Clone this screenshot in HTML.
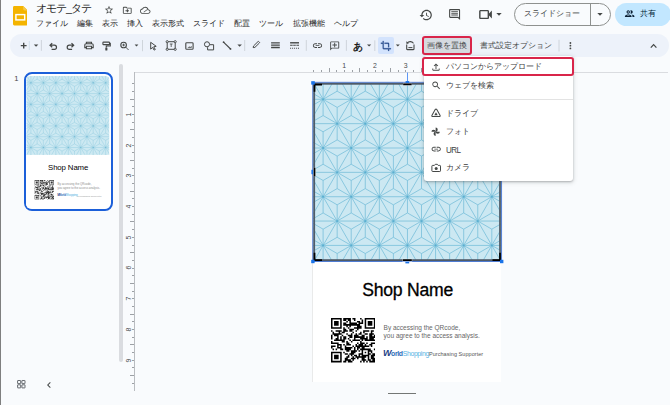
<!DOCTYPE html>
<html lang="ja"><head><meta charset="utf-8">
<style>
html,body{margin:0;padding:0}
body{width:670px;height:405px;overflow:hidden;position:relative;background:#f9fbfd;font-family:"Liberation Sans",sans-serif;color:#1f1f1f}
.a{position:absolute}
.t{position:absolute;white-space:nowrap;line-height:1}
svg{display:block}
.ic{position:absolute;fill:#444746}
.sep{position:absolute;width:1px;background:#c7c7c7;top:40px;height:12px}
.tick{position:absolute;background:#9ca0a5}
</style></head><body>
<div class="a" style="left:0;top:0;width:1px;height:405px;background:#7f7f7f"></div>

<!-- logo -->
<svg class="a" style="left:12.7px;top:6.3px" width="14.6" height="19.4" viewBox="0 0 14.6 19.4">
<path d="M1.3 0h8.9l4.4 4.4v13.7c0 .7-.6 1.3-1.3 1.3H1.3C.6 19.4 0 18.8 0 18.1V1.3C0 .6.6 0 1.3 0z" fill="#f4b400"/>
<path d="M10.2 0l4.4 4.4h-3.1c-.7 0-1.3-.6-1.3-1.3z" fill="#f7c94a"/>
<rect x="2.9" y="8.6" width="8.8" height="5.3" fill="none" stroke="#fff" stroke-width="1.45"/>
</svg>
<div class="t" style="left:35.5px;top:3.1px;font-size:10.8px;color:#1f1f1f;letter-spacing:-0.85px">オモテ_タテ</div>

<!-- star folder cloud -->
<svg class="ic" style="left:104.4px;top:4.9px" width="10" height="10" viewBox="0 0 24 24"><path d="M22 9.24l-7.19-.62L12 2 9.19 8.63 2 9.24l5.46 4.73L5.82 21 12 17.27 18.18 21l-1.63-7.03L22 9.24zM12 15.4l-3.76 2.27 1-4.28-3.32-2.88 4.38-.38L12 6.1l1.71 4.04 4.38.38-3.32 2.88 1 4.28L12 15.4z"/></svg>
<svg class="ic" style="left:121.6px;top:4.6px" width="10.5" height="10.5" viewBox="0 0 24 24"><path d="M20 6h-8l-2-2H4c-1.1 0-1.99.9-1.99 2L2 18c0 1.1.9 2 2 2h16c1.1 0 2-.9 2-2V8c0-1.1-.9-2-2-2zm0 12H4V6h5.17l2 2H20v10zm-7.84-6H8v2h4.16l-1.59 1.59L11.99 17 16 13.01 11.99 9l-1.41 1.41L12.16 12z"/></svg>
<svg class="ic" style="left:140.1px;top:4.6px" width="10.5" height="10.5" viewBox="0 0 24 24"><path d="M19.35 10.04C18.67 6.59 15.64 4 12 4 9.11 4 6.6 5.64 5.35 8.04 2.34 8.36 0 10.91 0 14c0 3.31 2.69 6 6 6h13c2.76 0 5-2.24 5-5 0-2.64-2.05-4.78-4.65-4.96zM19 18H6c-2.21 0-4-1.79-4-4 0-2.05 1.53-3.76 3.56-3.97l1.07-.11.5-.95C8.08 7.14 9.94 6 12 6c2.62 0 4.88 1.86 5.39 4.43l.3 1.5 1.53.11c1.56.1 2.78 1.41 2.78 2.96 0 1.65-1.35 3-3 3zM8 16l9-7 1 1.2-9 7z"/></svg>

<!-- menu -->
<div class="t" style="left:36.3px;top:19.9px;font-size:8px">ファイル</div>
<div class="t" style="left:77px;top:19.9px;font-size:8px">編集</div>
<div class="t" style="left:102.2px;top:19.9px;font-size:8px">表示</div>
<div class="t" style="left:127.3px;top:19.9px;font-size:8px">挿入</div>
<div class="t" style="left:152.3px;top:19.9px;font-size:8px">表示形式</div>
<div class="t" style="left:193.2px;top:19.9px;font-size:8px">スライド</div>
<div class="t" style="left:234.4px;top:19.9px;font-size:8px">配置</div>
<div class="t" style="left:259.4px;top:19.9px;font-size:8px">ツール</div>
<div class="t" style="left:293px;top:19.9px;font-size:8px">拡張機能</div>
<div class="t" style="left:333.8px;top:19.9px;font-size:8px">ヘルプ</div>

<!-- right header -->
<svg class="ic" style="left:419px;top:7.5px" width="14" height="14" viewBox="0 0 24 24"><path d="M13 3c-4.97 0-9 4.03-9 9H1l3.89 3.89.07.14L9 12H6c0-3.87 3.13-7 7-7s7 3.13 7 7-3.13 7-7 7c-1.93 0-3.68-.79-4.94-2.06l-1.42 1.42C8.27 19.99 10.51 21 13 21c4.97 0 9-4.03 9-9s-4.03-9-9-9zm-1 5v5l4.28 2.54.72-1.21-3.5-2.08V8H12z"/></svg>
<svg class="ic" style="left:447.7px;top:8.2px" width="13.2" height="13.2" viewBox="0 0 24 24"><path d="M20 2H4c-1.1 0-2 .9-2 2v12c0 1.1.9 2 2 2h14l4 4V4c0-1.1-.9-2-2-2zm0 15.17L18.83 16H4V4h16v13.17zM6 12h12v1.6H6zm0-3h12v1.6H6zm0-3h12v1.6H6z"/></svg>
<svg class="ic" style="left:476.6px;top:5.6px" width="17" height="17" viewBox="0 0 24 24"><path d="M17 10.5V7.5c0-1.1-.9-2-2-2H5c-1.1 0-2 .9-2 2v9c0 1.1.9 2 2 2h10c1.1 0 2-.9 2-2v-3l4 4v-11l-4 4zM15 16.5H5v-9h10v9z"/></svg>
<svg class="ic" style="left:495px;top:10px" width="8" height="8" viewBox="0 0 24 24"><path d="M4 9l8 8 8-8z"/></svg>

<div class="a" style="left:514px;top:3.3px;width:94.5px;height:20.8px;border:1px solid #8e918f;border-radius:12px"></div>
<div class="a" style="left:590px;top:4.3px;width:1px;height:20.8px;background:#8e918f"></div>
<div class="t" style="left:523.7px;top:10px;font-size:8px;color:#444746">スライドショー</div>
<svg class="ic" style="left:595.5px;top:10px" width="8" height="8" viewBox="0 0 24 24"><path d="M4 9l8 8 8-8z"/></svg>

<div class="a" style="left:614.7px;top:3px;width:56px;height:22.8px;background:#c2e7ff;border-radius:11.4px"></div>
<svg class="a" style="left:623.9px;top:8.45px;fill:#0a1f33" width="11.3" height="11.3" viewBox="0 0 24 24"><path d="M9 13.75c-2.34 0-7 1.17-7 3.5V19h14v-1.75c0-2.33-4.66-3.5-7-3.5zM4.34 17c.84-.58 2.87-1.25 4.66-1.25s3.82.67 4.66 1.25H4.34zM9 12c1.93 0 3.5-1.57 3.5-3.5S10.93 5 9 5 5.5 6.57 5.5 8.5 7.07 12 9 12zm0-5c.83 0 1.5.67 1.5 1.5S9.830 10 9 10s-1.5-.67-1.5-1.5S8.17 7 9 7zm7.04 6.810c1.16.84 1.96 1.96 1.96 3.44V19h4v-1.75c0-2.02-3.5-3.17-5.96-3.44zM15 12c1.93 0 3.5-1.57 3.5-3.5S16.93 5 15 5c-.54 0-1.04.13-1.5.35.63.89 1 1.98 1 3.15s-.37 2.26-1 3.15c.46.22.96.35 1.5.35z"/></svg>
<div class="t" style="left:639.8px;top:10px;font-size:8px;color:#001d35">共有</div>

<!-- toolbar -->
<div class="a" style="left:9.7px;top:33.7px;width:659.6px;height:23px;background:#edf2fa;border-radius:11.5px"></div>
<div class="a" style="left:377.5px;top:37.1px;width:16.5px;height:16.6px;background:#d3e3fd;border-radius:2px"></div>
<svg class="a" style="left:0;top:0" width="670" height="405" viewBox="0 0 670 405">
<g fill="none" stroke="#444746" stroke-width="1.1">
<!-- plus -->
<path d="M20.8 45.6H26.6M23.7 42.8V48.4" stroke-width="1.4"/>
<path d="M29.3 41V50" stroke="#c9dbe9" stroke-width="0.8"/>
<path d="M41.4 40V50.8M142.5 40V51.2M244.7 40V51M306.3 40V50.8M346.4 40V50.8M374.8 40.3V51M559 39.8V51.5" stroke="#c7cdd3" stroke-width="0.8"/>
<!-- undo / redo -->
<path d="M52.2 43.1L50 45.2L52.2 47.3M50.2 45.2H54.4A2.1 2.1 0 0 1 54.4 49.4H51.6" stroke-width="1.2"/>
<path d="M71.5 43.1L73.7 45.2L71.5 47.3M73.5 45.2H69.3A2.1 2.1 0 0 0 69.3 49.4H72.1" stroke-width="1.2"/>
<!-- print -->
<path d="M86.4 43.8V42.2H91.5V43.8M86.4 47.6H84.8V45A1.2 1.2 0 0 1 86 43.8H92A1.2 1.2 0 0 1 93.2 45V47.6H91.5M86.4 46.2H91.5V48.8H86.4Z" stroke-width="1.1"/>
<!-- paint roller -->
<path d="M103.6 42.1H108.8A.7 .7 0 0 1 109.5 42.8V43.9A.7 .7 0 0 1 108.8 44.6H103.6A.7 .7 0 0 1 102.9 43.9V42.8A.7 .7 0 0 1 103.6 42.1ZM109.5 43.3H110.3V46H106.3V47.6" stroke-width="1.1"/>
<rect x="105.3" y="47.5" width="2.1" height="3.1" rx=".5" fill="#444746" stroke="none"/>
<!-- zoom -->
<circle cx="123.6" cy="45" r="2.8" stroke-width="1.1"/>
<path d="M125.6 47L128.6 50M122.3 45H124.9M123.6 43.7V46.3" stroke-width="0.9"/>
<!-- cursor -->
<path d="M150.7 42.3L156.2 46.3L153.7 46.8L155.3 49.5L154.1 50.1L152.6 47.4L150.7 49.1Z" stroke-width="1"/>
<!-- text box -->
<rect x="167.2" y="41.7" width="8" height="7.6" stroke-width="1"/>
<g fill="#edf2fa" stroke-width="0.9"><circle cx="167.2" cy="41.7" r="1.1"/><circle cx="175.2" cy="41.7" r="1.1"/><circle cx="167.2" cy="49.3" r="1.1"/><circle cx="175.2" cy="49.3" r="1.1"/></g>
<path d="M169.8 44H172.6M171.2 44V47" stroke-width="0.8"/>
<!-- image -->
<rect x="185.8" y="42.7" width="7.3" height="6.6" rx="0.9" stroke-width="1.1"/>
<path d="M187.4 47.7L189.3 46.6L190.4 47.1L191.7 46V47.7Z" fill="#444746" stroke="none"/>
<!-- shapes -->
<circle cx="207" cy="44.3" r="2.55" stroke-width="1"/>
<path d="M209.9 44.7H213.6V49.9H207.6V47.2" stroke-width="1"/>
<!-- line -->
<path d="M223.5 42.1L230.6 49" stroke-width="1.1"/>
<circle cx="223.6" cy="42.2" r=".9" fill="#444746" stroke="none"/><circle cx="230.5" cy="48.9" r=".9" fill="#444746" stroke="none"/>
<!-- pen -->
<path d="M253.2 47.6L253.5 46L258 41.6A.6 .6 0 0 1 258.8 41.6L259.4 42.2A.6 .6 0 0 1 259.4 43L254.9 47.4Z" stroke-width="1"/>
<!-- line weight -->
<path d="M271.1 42.8H279.8M271.1 45.2H279.8M271.1 47.5H279.8" stroke-width="1.3"/>
<!-- line dash -->
<path d="M290.1 42.8H299" stroke-width="1.4"/>
<path d="M290.1 45.2H292.7M293.2 45.2H295.8M296.4 45.2H299" stroke-width="1.1"/>
<path d="M290.1 48.3H291.1M292.1 48.3H293.1M294.1 48.3H295.1M296.1 48.3H297.1M298 48.3H299" stroke-width="1.1"/>
<!-- arrows -->
<g fill="#444746" stroke="none">
<path d="M33.8 44.5H38.3L36.05 46.8Z"/>
<path d="M134.6 44.5H138.4L136.5 46.6Z"/>
<path d="M237.4 44.5H241.9L239.65 46.7Z"/>
<path d="M367 44.6H371.2L369.1 46.5Z"/>
<path d="M395.8 44.6H399.8L397.8 46.6Z"/>
</g>
</g>
<g fill="#444746">
<!-- link -->
<path transform="translate(311.98 40.08) scale(0.46)" d="M3.9 12c0-1.71 1.39-3.1 3.1-3.1h4V7H7c-2.76 0-5 2.24-5 5s2.24 5 5 5h4v-1.9H7c-1.71 0-3.1-1.39-3.1-3.1zM8 13h8v-2H8v2zm9-6h-4v1.9h4c1.71 0 3.1 1.39 3.1 3.1s-1.39 3.1-3.1 3.1h-4V17h4c2.76 0 5-2.24 5-5s-2.24-5-5-5z"/>
<!-- add comment -->
<path transform="translate(329.3 40.5) scale(0.45)" d="M22 4c0-1.1-.9-2-2-2H4c-1.1 0-1.99.9-1.99 2L2 22l4-4h14c1.1 0 2-.9 2-2V4zm-2 12H5.17L4 17.17V4h16v12zM13 5h-2v4H7v2h4v4h2v-4h4V9h-4z"/>
<!-- reset image -->
</g>
<g fill="none" stroke="#444746" stroke-width="1.1">
<path d="M406.7 44.6V48.9A.7 .7 0 0 0 407.4 49.6H413.3A.7 .7 0 0 0 414 48.9V44.6"/>
<path d="M407.3 42.9A3.4 2.6 0 0 1 413.5 43.4"/>
<path d="M408.4 47.6H412.4" stroke-width="1"/>
</g>
<path d="M406.2 41.2L406.6 43.9L409 43.2Z" fill="#444746"/>
<!-- crop -->
<path fill="#23488a" transform="translate(380.45 40.5) scale(0.455)" d="M17 15h2V7c0-1.1-.9-2-2-2H9v2h8v8zM7 17V1H5v4H1v2h4v10c0 1.1.9 2 2 2h10v4h2v-4h4v-2H7z" stroke="#23488a" stroke-width="0.5"/>
<g fill="#444746">
<!-- more vert -->
<circle cx="570.4" cy="43" r=".9"/><circle cx="570.4" cy="45.7" r=".9"/><circle cx="570.4" cy="48.4" r=".9"/>
</g>
<path d="M650.8 47.6L653.6 44.6L656.4 47.6" fill="none" stroke="#444746" stroke-width="1.2"/>
</svg>
<div class="t" style="left:352.6px;top:41.6px;font-size:10px;font-weight:bold;color:#1f1f1f">あ</div>
<div class="a" style="left:422.2px;top:35.7px;width:45.5px;height:14.9px;border:2px solid #d9254a;border-radius:3px;background:#d5dae0"></div>
<div class="t" style="left:427px;top:42.3px;font-size:8px;color:#444746">画像を置換</div>
<div class="t" style="left:479.7px;top:42.3px;font-size:8px;color:#444746">書式設定オプション</div>


<!-- left panel -->
<div class="t" style="left:14.3px;top:75.3px;font-size:7.6px;color:#444746">1</div>
<div class="a" style="left:24px;top:72.4px;width:84.6px;height:134.2px;border:2.2px solid #1b5fd9;border-radius:8px;background:#fff;overflow:hidden"></div>
<div class="a" style="left:26.4px;top:75.55px;width:188.5px;height:298.5px;background:#fff;overflow:hidden;border-radius:10px;transform-origin:0 0;transform:scale(0.443)"><svg width="187.90" height="177.80" style="position:absolute;left:0.60px;top:0.00px;background:#cde9f2" viewBox="0 0 187.90 177.80"><path d="M-5.00 -57.76L192.90 -57.76M-60.20 -57.76L-74.26 -33.41M-60.20 -57.76L-46.14 -33.41M-46.14 -49.64L-60.20 -57.76M-46.14 -49.64L-32.08 -57.76M-46.14 -49.64L-46.14 -33.41M-60.20 -41.52L-60.20 -57.76M-60.20 -41.52L-74.26 -33.41M-60.20 -41.52L-46.14 -33.41M-32.08 -57.76L-46.14 -33.41M-32.08 -57.76L-18.02 -33.41M-18.02 -49.64L-32.08 -57.76M-18.02 -49.64L-3.96 -57.76M-18.02 -49.64L-18.02 -33.41M-32.08 -41.52L-32.08 -57.76M-32.08 -41.52L-46.14 -33.41M-32.08 -41.52L-18.02 -33.41M-3.96 -57.76L-18.02 -33.41M-3.96 -57.76L10.10 -33.41M10.10 -49.64L-3.96 -57.76M10.10 -49.64L24.16 -57.76M10.10 -49.64L10.10 -33.41M-3.96 -41.52L-3.96 -57.76M-3.96 -41.52L-18.02 -33.41M-3.96 -41.52L10.10 -33.41M24.16 -57.76L10.10 -33.41M24.16 -57.76L38.22 -33.41M38.22 -49.64L24.16 -57.76M38.22 -49.64L52.28 -57.76M38.22 -49.64L38.22 -33.41M24.16 -41.52L24.16 -57.76M24.16 -41.52L10.10 -33.41M24.16 -41.52L38.22 -33.41M52.28 -57.76L38.22 -33.41M52.28 -57.76L66.34 -33.41M66.34 -49.64L52.28 -57.76M66.34 -49.64L80.40 -57.76M66.34 -49.64L66.34 -33.41M52.28 -41.52L52.28 -57.76M52.28 -41.52L38.22 -33.41M52.28 -41.52L66.34 -33.41M80.40 -57.76L66.34 -33.41M80.40 -57.76L94.46 -33.41M94.46 -49.64L80.40 -57.76M94.46 -49.64L108.52 -57.76M94.46 -49.64L94.46 -33.41M80.40 -41.52L80.40 -57.76M80.40 -41.52L66.34 -33.41M80.40 -41.52L94.46 -33.41M108.52 -57.76L94.46 -33.41M108.52 -57.76L122.58 -33.41M122.58 -49.64L108.52 -57.76M122.58 -49.64L136.64 -57.76M122.58 -49.64L122.58 -33.41M108.52 -41.52L108.52 -57.76M108.52 -41.52L94.46 -33.41M108.52 -41.52L122.58 -33.41M136.64 -57.76L122.58 -33.41M136.64 -57.76L150.70 -33.41M150.70 -49.64L136.64 -57.76M150.70 -49.64L164.76 -57.76M150.70 -49.64L150.70 -33.41M136.64 -41.52L136.64 -57.76M136.64 -41.52L122.58 -33.41M136.64 -41.52L150.70 -33.41M164.76 -57.76L150.70 -33.41M164.76 -57.76L178.82 -33.41M178.82 -49.64L164.76 -57.76M178.82 -49.64L192.88 -57.76M178.82 -49.64L178.82 -33.41M164.76 -41.52L164.76 -57.76M164.76 -41.52L150.70 -33.41M164.76 -41.52L178.82 -33.41M192.88 -57.76L178.82 -33.41M192.88 -57.76L206.94 -33.41M206.94 -49.64L192.88 -57.76M206.94 -49.64L221.00 -57.76M206.94 -49.64L206.94 -33.41M192.88 -41.52L192.88 -57.76M192.88 -41.52L178.82 -33.41M192.88 -41.52L206.94 -33.41M221.00 -57.76L206.94 -33.41M221.00 -57.76L235.06 -33.41M235.06 -49.64L221.00 -57.76M235.06 -49.64L249.12 -57.76M235.06 -49.64L235.06 -33.41M221.00 -41.52L221.00 -57.76M221.00 -41.52L206.94 -33.41M221.00 -41.52L235.06 -33.41M249.12 -57.76L235.06 -33.41M249.12 -57.76L263.18 -33.41M263.18 -49.64L249.12 -57.76M263.18 -49.64L277.24 -57.76M263.18 -49.64L263.18 -33.41M249.12 -41.52L249.12 -57.76M249.12 -41.52L235.06 -33.41M249.12 -41.52L263.18 -33.41M277.24 -57.76L263.18 -33.41M277.24 -57.76L291.30 -33.41M291.30 -49.64L277.24 -57.76M291.30 -49.64L305.36 -57.76M291.30 -49.64L291.30 -33.41M277.24 -41.52L277.24 -57.76M277.24 -41.52L263.18 -33.41M277.24 -41.52L291.30 -33.41M-5.00 -33.41L192.90 -33.41M-74.26 -33.41L-88.32 -9.05M-74.26 -33.41L-60.20 -9.05M-60.20 -25.29L-74.26 -33.41M-60.20 -25.29L-46.14 -33.41M-60.20 -25.29L-60.20 -9.05M-74.26 -17.17L-74.26 -33.41M-74.26 -17.17L-88.32 -9.05M-74.26 -17.17L-60.20 -9.05M-46.14 -33.41L-60.20 -9.05M-46.14 -33.41L-32.08 -9.05M-32.08 -25.29L-46.14 -33.41M-32.08 -25.29L-18.02 -33.41M-32.08 -25.29L-32.08 -9.05M-46.14 -17.17L-46.14 -33.41M-46.14 -17.17L-60.20 -9.05M-46.14 -17.17L-32.08 -9.05M-18.02 -33.41L-32.08 -9.05M-18.02 -33.41L-3.96 -9.05M-3.96 -25.29L-18.02 -33.41M-3.96 -25.29L10.10 -33.41M-3.96 -25.29L-3.96 -9.05M-18.02 -17.17L-18.02 -33.41M-18.02 -17.17L-32.08 -9.05M-18.02 -17.17L-3.96 -9.05M10.10 -33.41L-3.96 -9.05M10.10 -33.41L24.16 -9.05M24.16 -25.29L10.10 -33.41M24.16 -25.29L38.22 -33.41M24.16 -25.29L24.16 -9.05M10.10 -17.17L10.10 -33.41M10.10 -17.17L-3.96 -9.05M10.10 -17.17L24.16 -9.05M38.22 -33.41L24.16 -9.05M38.22 -33.41L52.28 -9.05M52.28 -25.29L38.22 -33.41M52.28 -25.29L66.34 -33.41M52.28 -25.29L52.28 -9.05M38.22 -17.17L38.22 -33.41M38.22 -17.17L24.16 -9.05M38.22 -17.17L52.28 -9.05M66.34 -33.41L52.28 -9.05M66.34 -33.41L80.40 -9.05M80.40 -25.29L66.34 -33.41M80.40 -25.29L94.46 -33.41M80.40 -25.29L80.40 -9.05M66.34 -17.17L66.34 -33.41M66.34 -17.17L52.28 -9.05M66.34 -17.17L80.40 -9.05M94.46 -33.41L80.40 -9.05M94.46 -33.41L108.52 -9.05M108.52 -25.29L94.46 -33.41M108.52 -25.29L122.58 -33.41M108.52 -25.29L108.52 -9.05M94.46 -17.17L94.46 -33.41M94.46 -17.17L80.40 -9.05M94.46 -17.17L108.52 -9.05M122.58 -33.41L108.52 -9.05M122.58 -33.41L136.64 -9.05M136.64 -25.29L122.58 -33.41M136.64 -25.29L150.70 -33.41M136.64 -25.29L136.64 -9.05M122.58 -17.17L122.58 -33.41M122.58 -17.17L108.52 -9.05M122.58 -17.17L136.64 -9.05M150.70 -33.41L136.64 -9.05M150.70 -33.41L164.76 -9.05M164.76 -25.29L150.70 -33.41M164.76 -25.29L178.82 -33.41M164.76 -25.29L164.76 -9.05M150.70 -17.17L150.70 -33.41M150.70 -17.17L136.64 -9.05M150.70 -17.17L164.76 -9.05M178.82 -33.41L164.76 -9.05M178.82 -33.41L192.88 -9.05M192.88 -25.29L178.82 -33.41M192.88 -25.29L206.94 -33.41M192.88 -25.29L192.88 -9.05M178.82 -17.17L178.82 -33.41M178.82 -17.17L164.76 -9.05M178.82 -17.17L192.88 -9.05M206.94 -33.41L192.88 -9.05M206.94 -33.41L221.00 -9.05M221.00 -25.29L206.94 -33.41M221.00 -25.29L235.06 -33.41M221.00 -25.29L221.00 -9.05M206.94 -17.17L206.94 -33.41M206.94 -17.17L192.88 -9.05M206.94 -17.17L221.00 -9.05M235.06 -33.41L221.00 -9.05M235.06 -33.41L249.12 -9.05M249.12 -25.29L235.06 -33.41M249.12 -25.29L263.18 -33.41M249.12 -25.29L249.12 -9.05M235.06 -17.17L235.06 -33.41M235.06 -17.17L221.00 -9.05M235.06 -17.17L249.12 -9.05M263.18 -33.41L249.12 -9.05M263.18 -33.41L277.24 -9.05M277.24 -25.29L263.18 -33.41M277.24 -25.29L291.30 -33.41M277.24 -25.29L277.24 -9.05M263.18 -17.17L263.18 -33.41M263.18 -17.17L249.12 -9.05M263.18 -17.17L277.24 -9.05M-5.00 -9.05L192.90 -9.05M-60.20 -9.05L-74.26 15.30M-60.20 -9.05L-46.14 15.30M-46.14 -0.94L-60.20 -9.05M-46.14 -0.94L-32.08 -9.05M-46.14 -0.94L-46.14 15.30M-60.20 7.18L-60.20 -9.05M-60.20 7.18L-74.26 15.30M-60.20 7.18L-46.14 15.30M-32.08 -9.05L-46.14 15.30M-32.08 -9.05L-18.02 15.30M-18.02 -0.94L-32.08 -9.05M-18.02 -0.94L-3.96 -9.05M-18.02 -0.94L-18.02 15.30M-32.08 7.18L-32.08 -9.05M-32.08 7.18L-46.14 15.30M-32.08 7.18L-18.02 15.30M-3.96 -9.05L-18.02 15.30M-3.96 -9.05L10.10 15.30M10.10 -0.94L-3.96 -9.05M10.10 -0.94L24.16 -9.05M10.10 -0.94L10.10 15.30M-3.96 7.18L-3.96 -9.05M-3.96 7.18L-18.02 15.30M-3.96 7.18L10.10 15.30M24.16 -9.05L10.10 15.30M24.16 -9.05L38.22 15.30M38.22 -0.94L24.16 -9.05M38.22 -0.94L52.28 -9.05M38.22 -0.94L38.22 15.30M24.16 7.18L24.16 -9.05M24.16 7.18L10.10 15.30M24.16 7.18L38.22 15.30M52.28 -9.05L38.22 15.30M52.28 -9.05L66.34 15.30M66.34 -0.94L52.28 -9.05M66.34 -0.94L80.40 -9.05M66.34 -0.94L66.34 15.30M52.28 7.18L52.28 -9.05M52.28 7.18L38.22 15.30M52.28 7.18L66.34 15.30M80.40 -9.05L66.34 15.30M80.40 -9.05L94.46 15.30M94.46 -0.94L80.40 -9.05M94.46 -0.94L108.52 -9.05M94.46 -0.94L94.46 15.30M80.40 7.18L80.40 -9.05M80.40 7.18L66.34 15.30M80.40 7.18L94.46 15.30M108.52 -9.05L94.46 15.30M108.52 -9.05L122.58 15.30M122.58 -0.94L108.52 -9.05M122.58 -0.94L136.64 -9.05M122.58 -0.94L122.58 15.30M108.52 7.18L108.52 -9.05M108.52 7.18L94.46 15.30M108.52 7.18L122.58 15.30M136.64 -9.05L122.58 15.30M136.64 -9.05L150.70 15.30M150.70 -0.94L136.64 -9.05M150.70 -0.94L164.76 -9.05M150.70 -0.94L150.70 15.30M136.64 7.18L136.64 -9.05M136.64 7.18L122.58 15.30M136.64 7.18L150.70 15.30M164.76 -9.05L150.70 15.30M164.76 -9.05L178.82 15.30M178.82 -0.94L164.76 -9.05M178.82 -0.94L192.88 -9.05M178.82 -0.94L178.82 15.30M164.76 7.18L164.76 -9.05M164.76 7.18L150.70 15.30M164.76 7.18L178.82 15.30M192.88 -9.05L178.82 15.30M192.88 -9.05L206.94 15.30M206.94 -0.94L192.88 -9.05M206.94 -0.94L221.00 -9.05M206.94 -0.94L206.94 15.30M192.88 7.18L192.88 -9.05M192.88 7.18L178.82 15.30M192.88 7.18L206.94 15.30M221.00 -9.05L206.94 15.30M221.00 -9.05L235.06 15.30M235.06 -0.94L221.00 -9.05M235.06 -0.94L249.12 -9.05M235.06 -0.94L235.06 15.30M221.00 7.18L221.00 -9.05M221.00 7.18L206.94 15.30M221.00 7.18L235.06 15.30M249.12 -9.05L235.06 15.30M249.12 -9.05L263.18 15.30M263.18 -0.94L249.12 -9.05M263.18 -0.94L277.24 -9.05M263.18 -0.94L263.18 15.30M249.12 7.18L249.12 -9.05M249.12 7.18L235.06 15.30M249.12 7.18L263.18 15.30M277.24 -9.05L263.18 15.30M277.24 -9.05L291.30 15.30M291.30 -0.94L277.24 -9.05M291.30 -0.94L305.36 -9.05M291.30 -0.94L291.30 15.30M277.24 7.18L277.24 -9.05M277.24 7.18L263.18 15.30M277.24 7.18L291.30 15.30M-5.00 15.30L192.90 15.30M-74.26 15.30L-88.32 39.65M-74.26 15.30L-60.20 39.65M-60.20 23.42L-74.26 15.30M-60.20 23.42L-46.14 15.30M-60.20 23.42L-60.20 39.65M-74.26 31.54L-74.26 15.30M-74.26 31.54L-88.32 39.65M-74.26 31.54L-60.20 39.65M-46.14 15.30L-60.20 39.65M-46.14 15.30L-32.08 39.65M-32.08 23.42L-46.14 15.30M-32.08 23.42L-18.02 15.30M-32.08 23.42L-32.08 39.65M-46.14 31.54L-46.14 15.30M-46.14 31.54L-60.20 39.65M-46.14 31.54L-32.08 39.65M-18.02 15.30L-32.08 39.65M-18.02 15.30L-3.96 39.65M-3.96 23.42L-18.02 15.30M-3.96 23.42L10.10 15.30M-3.96 23.42L-3.96 39.65M-18.02 31.54L-18.02 15.30M-18.02 31.54L-32.08 39.65M-18.02 31.54L-3.96 39.65M10.10 15.30L-3.96 39.65M10.10 15.30L24.16 39.65M24.16 23.42L10.10 15.30M24.16 23.42L38.22 15.30M24.16 23.42L24.16 39.65M10.10 31.54L10.10 15.30M10.10 31.54L-3.96 39.65M10.10 31.54L24.16 39.65M38.22 15.30L24.16 39.65M38.22 15.30L52.28 39.65M52.28 23.42L38.22 15.30M52.28 23.42L66.34 15.30M52.28 23.42L52.28 39.65M38.22 31.54L38.22 15.30M38.22 31.54L24.16 39.65M38.22 31.54L52.28 39.65M66.34 15.30L52.28 39.65M66.34 15.30L80.40 39.65M80.40 23.42L66.34 15.30M80.40 23.42L94.46 15.30M80.40 23.42L80.40 39.65M66.34 31.54L66.34 15.30M66.34 31.54L52.28 39.65M66.34 31.54L80.40 39.65M94.46 15.30L80.40 39.65M94.46 15.30L108.52 39.65M108.52 23.42L94.46 15.30M108.52 23.42L122.58 15.30M108.52 23.42L108.52 39.65M94.46 31.54L94.46 15.30M94.46 31.54L80.40 39.65M94.46 31.54L108.52 39.65M122.58 15.30L108.52 39.65M122.58 15.30L136.64 39.65M136.64 23.42L122.58 15.30M136.64 23.42L150.70 15.30M136.64 23.42L136.64 39.65M122.58 31.54L122.58 15.30M122.58 31.54L108.52 39.65M122.58 31.54L136.64 39.65M150.70 15.30L136.64 39.65M150.70 15.30L164.76 39.65M164.76 23.42L150.70 15.30M164.76 23.42L178.82 15.30M164.76 23.42L164.76 39.65M150.70 31.54L150.70 15.30M150.70 31.54L136.64 39.65M150.70 31.54L164.76 39.65M178.82 15.30L164.76 39.65M178.82 15.30L192.88 39.65M192.88 23.42L178.82 15.30M192.88 23.42L206.94 15.30M192.88 23.42L192.88 39.65M178.82 31.54L178.82 15.30M178.82 31.54L164.76 39.65M178.82 31.54L192.88 39.65M206.94 15.30L192.88 39.65M206.94 15.30L221.00 39.65M221.00 23.42L206.94 15.30M221.00 23.42L235.06 15.30M221.00 23.42L221.00 39.65M206.94 31.54L206.94 15.30M206.94 31.54L192.88 39.65M206.94 31.54L221.00 39.65M235.06 15.30L221.00 39.65M235.06 15.30L249.12 39.65M249.12 23.42L235.06 15.30M249.12 23.42L263.18 15.30M249.12 23.42L249.12 39.65M235.06 31.54L235.06 15.30M235.06 31.54L221.00 39.65M235.06 31.54L249.12 39.65M263.18 15.30L249.12 39.65M263.18 15.30L277.24 39.65M277.24 23.42L263.18 15.30M277.24 23.42L291.30 15.30M277.24 23.42L277.24 39.65M263.18 31.54L263.18 15.30M263.18 31.54L249.12 39.65M263.18 31.54L277.24 39.65M-5.00 39.65L192.90 39.65M-60.20 39.65L-74.26 64.01M-60.20 39.65L-46.14 64.01M-46.14 47.77L-60.20 39.65M-46.14 47.77L-32.08 39.65M-46.14 47.77L-46.14 64.01M-60.20 55.89L-60.20 39.65M-60.20 55.89L-74.26 64.01M-60.20 55.89L-46.14 64.01M-32.08 39.65L-46.14 64.01M-32.08 39.65L-18.02 64.01M-18.02 47.77L-32.08 39.65M-18.02 47.77L-3.96 39.65M-18.02 47.77L-18.02 64.01M-32.08 55.89L-32.08 39.65M-32.08 55.89L-46.14 64.01M-32.08 55.89L-18.02 64.01M-3.96 39.65L-18.02 64.01M-3.96 39.65L10.10 64.01M10.10 47.77L-3.96 39.65M10.10 47.77L24.16 39.65M10.10 47.77L10.10 64.01M-3.96 55.89L-3.96 39.65M-3.96 55.89L-18.02 64.01M-3.96 55.89L10.10 64.01M24.16 39.65L10.10 64.01M24.16 39.65L38.22 64.01M38.22 47.77L24.16 39.65M38.22 47.77L52.28 39.65M38.22 47.77L38.22 64.01M24.16 55.89L24.16 39.65M24.16 55.89L10.10 64.01M24.16 55.89L38.22 64.01M52.28 39.65L38.22 64.01M52.28 39.65L66.34 64.01M66.34 47.77L52.28 39.65M66.34 47.77L80.40 39.65M66.34 47.77L66.34 64.01M52.28 55.89L52.28 39.65M52.28 55.89L38.22 64.01M52.28 55.89L66.34 64.01M80.40 39.65L66.34 64.01M80.40 39.65L94.46 64.01M94.46 47.77L80.40 39.65M94.46 47.77L108.52 39.65M94.46 47.77L94.46 64.01M80.40 55.89L80.40 39.65M80.40 55.89L66.34 64.01M80.40 55.89L94.46 64.01M108.52 39.65L94.46 64.01M108.52 39.65L122.58 64.01M122.58 47.77L108.52 39.65M122.58 47.77L136.64 39.65M122.58 47.77L122.58 64.01M108.52 55.89L108.52 39.65M108.52 55.89L94.46 64.01M108.52 55.89L122.58 64.01M136.64 39.65L122.58 64.01M136.64 39.65L150.70 64.01M150.70 47.77L136.64 39.65M150.70 47.77L164.76 39.65M150.70 47.77L150.70 64.01M136.64 55.89L136.64 39.65M136.64 55.89L122.58 64.01M136.64 55.89L150.70 64.01M164.76 39.65L150.70 64.01M164.76 39.65L178.82 64.01M178.82 47.77L164.76 39.65M178.82 47.77L192.88 39.65M178.82 47.77L178.82 64.01M164.76 55.89L164.76 39.65M164.76 55.89L150.70 64.01M164.76 55.89L178.82 64.01M192.88 39.65L178.82 64.01M192.88 39.65L206.94 64.01M206.94 47.77L192.88 39.65M206.94 47.77L221.00 39.65M206.94 47.77L206.94 64.01M192.88 55.89L192.88 39.65M192.88 55.89L178.82 64.01M192.88 55.89L206.94 64.01M221.00 39.65L206.94 64.01M221.00 39.65L235.06 64.01M235.06 47.77L221.00 39.65M235.06 47.77L249.12 39.65M235.06 47.77L235.06 64.01M221.00 55.89L221.00 39.65M221.00 55.89L206.94 64.01M221.00 55.89L235.06 64.01M249.12 39.65L235.06 64.01M249.12 39.65L263.18 64.01M263.18 47.77L249.12 39.65M263.18 47.77L277.24 39.65M263.18 47.77L263.18 64.01M249.12 55.89L249.12 39.65M249.12 55.89L235.06 64.01M249.12 55.89L263.18 64.01M277.24 39.65L263.18 64.01M277.24 39.65L291.30 64.01M291.30 47.77L277.24 39.65M291.30 47.77L305.36 39.65M291.30 47.77L291.30 64.01M277.24 55.89L277.24 39.65M277.24 55.89L263.18 64.01M277.24 55.89L291.30 64.01M-5.00 64.01L192.90 64.01M-74.26 64.01L-88.32 88.36M-74.26 64.01L-60.20 88.36M-60.20 72.12L-74.26 64.01M-60.20 72.12L-46.14 64.01M-60.20 72.12L-60.20 88.36M-74.26 80.24L-74.26 64.01M-74.26 80.24L-88.32 88.36M-74.26 80.24L-60.20 88.36M-46.14 64.01L-60.20 88.36M-46.14 64.01L-32.08 88.36M-32.08 72.12L-46.14 64.01M-32.08 72.12L-18.02 64.01M-32.08 72.12L-32.08 88.36M-46.14 80.24L-46.14 64.01M-46.14 80.24L-60.20 88.36M-46.14 80.24L-32.08 88.36M-18.02 64.01L-32.08 88.36M-18.02 64.01L-3.96 88.36M-3.96 72.12L-18.02 64.01M-3.96 72.12L10.10 64.01M-3.96 72.12L-3.96 88.36M-18.02 80.24L-18.02 64.01M-18.02 80.24L-32.08 88.36M-18.02 80.24L-3.96 88.36M10.10 64.01L-3.96 88.36M10.10 64.01L24.16 88.36M24.16 72.12L10.10 64.01M24.16 72.12L38.22 64.01M24.16 72.12L24.16 88.36M10.10 80.24L10.10 64.01M10.10 80.24L-3.96 88.36M10.10 80.24L24.16 88.36M38.22 64.01L24.16 88.36M38.22 64.01L52.28 88.36M52.28 72.12L38.22 64.01M52.28 72.12L66.34 64.01M52.28 72.12L52.28 88.36M38.22 80.24L38.22 64.01M38.22 80.24L24.16 88.36M38.22 80.24L52.28 88.36M66.34 64.01L52.28 88.36M66.34 64.01L80.40 88.36M80.40 72.12L66.34 64.01M80.40 72.12L94.46 64.01M80.40 72.12L80.40 88.36M66.34 80.24L66.34 64.01M66.34 80.24L52.28 88.36M66.34 80.24L80.40 88.36M94.46 64.01L80.40 88.36M94.46 64.01L108.52 88.36M108.52 72.12L94.46 64.01M108.52 72.12L122.58 64.01M108.52 72.12L108.52 88.36M94.46 80.24L94.46 64.01M94.46 80.24L80.40 88.36M94.46 80.24L108.52 88.36M122.58 64.01L108.52 88.36M122.58 64.01L136.64 88.36M136.64 72.12L122.58 64.01M136.64 72.12L150.70 64.01M136.64 72.12L136.64 88.36M122.58 80.24L122.58 64.01M122.58 80.24L108.52 88.36M122.58 80.24L136.64 88.36M150.70 64.01L136.64 88.36M150.70 64.01L164.76 88.36M164.76 72.12L150.70 64.01M164.76 72.12L178.82 64.01M164.76 72.12L164.76 88.36M150.70 80.24L150.70 64.01M150.70 80.24L136.64 88.36M150.70 80.24L164.76 88.36M178.82 64.01L164.76 88.36M178.82 64.01L192.88 88.36M192.88 72.12L178.82 64.01M192.88 72.12L206.94 64.01M192.88 72.12L192.88 88.36M178.82 80.24L178.82 64.01M178.82 80.24L164.76 88.36M178.82 80.24L192.88 88.36M206.94 64.01L192.88 88.36M206.94 64.01L221.00 88.36M221.00 72.12L206.94 64.01M221.00 72.12L235.06 64.01M221.00 72.12L221.00 88.36M206.94 80.24L206.94 64.01M206.94 80.24L192.88 88.36M206.94 80.24L221.00 88.36M235.06 64.01L221.00 88.36M235.06 64.01L249.12 88.36M249.12 72.12L235.06 64.01M249.12 72.12L263.18 64.01M249.12 72.12L249.12 88.36M235.06 80.24L235.06 64.01M235.06 80.24L221.00 88.36M235.06 80.24L249.12 88.36M263.18 64.01L249.12 88.36M263.18 64.01L277.24 88.36M277.24 72.12L263.18 64.01M277.24 72.12L291.30 64.01M277.24 72.12L277.24 88.36M263.18 80.24L263.18 64.01M263.18 80.24L249.12 88.36M263.18 80.24L277.24 88.36M-5.00 88.36L192.90 88.36M-60.20 88.36L-74.26 112.71M-60.20 88.36L-46.14 112.71M-46.14 96.48L-60.20 88.36M-46.14 96.48L-32.08 88.36M-46.14 96.48L-46.14 112.71M-60.20 104.59L-60.20 88.36M-60.20 104.59L-74.26 112.71M-60.20 104.59L-46.14 112.71M-32.08 88.36L-46.14 112.71M-32.08 88.36L-18.02 112.71M-18.02 96.48L-32.08 88.36M-18.02 96.48L-3.96 88.36M-18.02 96.48L-18.02 112.71M-32.08 104.59L-32.08 88.36M-32.08 104.59L-46.14 112.71M-32.08 104.59L-18.02 112.71M-3.96 88.36L-18.02 112.71M-3.96 88.36L10.10 112.71M10.10 96.48L-3.96 88.36M10.10 96.48L24.16 88.36M10.10 96.48L10.10 112.71M-3.96 104.59L-3.96 88.36M-3.96 104.59L-18.02 112.71M-3.96 104.59L10.10 112.71M24.16 88.36L10.10 112.71M24.16 88.36L38.22 112.71M38.22 96.48L24.16 88.36M38.22 96.48L52.28 88.36M38.22 96.48L38.22 112.71M24.16 104.59L24.16 88.36M24.16 104.59L10.10 112.71M24.16 104.59L38.22 112.71M52.28 88.36L38.22 112.71M52.28 88.36L66.34 112.71M66.34 96.48L52.28 88.36M66.34 96.48L80.40 88.36M66.34 96.48L66.34 112.71M52.28 104.59L52.28 88.36M52.28 104.59L38.22 112.71M52.28 104.59L66.34 112.71M80.40 88.36L66.34 112.71M80.40 88.36L94.46 112.71M94.46 96.48L80.40 88.36M94.46 96.48L108.52 88.36M94.46 96.48L94.46 112.71M80.40 104.59L80.40 88.36M80.40 104.59L66.34 112.71M80.40 104.59L94.46 112.71M108.52 88.36L94.46 112.71M108.52 88.36L122.58 112.71M122.58 96.48L108.52 88.36M122.58 96.48L136.64 88.36M122.58 96.48L122.58 112.71M108.52 104.59L108.52 88.36M108.52 104.59L94.46 112.71M108.52 104.59L122.58 112.71M136.64 88.36L122.58 112.71M136.64 88.36L150.70 112.71M150.70 96.48L136.64 88.36M150.70 96.48L164.76 88.36M150.70 96.48L150.70 112.71M136.64 104.59L136.64 88.36M136.64 104.59L122.58 112.71M136.64 104.59L150.70 112.71M164.76 88.36L150.70 112.71M164.76 88.36L178.82 112.71M178.82 96.48L164.76 88.36M178.82 96.48L192.88 88.36M178.82 96.48L178.82 112.71M164.76 104.59L164.76 88.36M164.76 104.59L150.70 112.71M164.76 104.59L178.82 112.71M192.88 88.36L178.82 112.71M192.88 88.36L206.94 112.71M206.94 96.48L192.88 88.36M206.94 96.48L221.00 88.36M206.94 96.48L206.94 112.71M192.88 104.59L192.88 88.36M192.88 104.59L178.82 112.71M192.88 104.59L206.94 112.71M221.00 88.36L206.94 112.71M221.00 88.36L235.06 112.71M235.06 96.48L221.00 88.36M235.06 96.48L249.12 88.36M235.06 96.48L235.06 112.71M221.00 104.59L221.00 88.36M221.00 104.59L206.94 112.71M221.00 104.59L235.06 112.71M249.12 88.36L235.06 112.71M249.12 88.36L263.18 112.71M263.18 96.48L249.12 88.36M263.18 96.48L277.24 88.36M263.18 96.48L263.18 112.71M249.12 104.59L249.12 88.36M249.12 104.59L235.06 112.71M249.12 104.59L263.18 112.71M277.24 88.36L263.18 112.71M277.24 88.36L291.30 112.71M291.30 96.48L277.24 88.36M291.30 96.48L305.36 88.36M291.30 96.48L291.30 112.71M277.24 104.59L277.24 88.36M277.24 104.59L263.18 112.71M277.24 104.59L291.30 112.71M-5.00 112.71L192.90 112.71M-74.26 112.71L-88.32 137.06M-74.26 112.71L-60.20 137.06M-60.20 120.83L-74.26 112.71M-60.20 120.83L-46.14 112.71M-60.20 120.83L-60.20 137.06M-74.26 128.95L-74.26 112.71M-74.26 128.95L-88.32 137.06M-74.26 128.95L-60.20 137.06M-46.14 112.71L-60.20 137.06M-46.14 112.71L-32.08 137.06M-32.08 120.83L-46.14 112.71M-32.08 120.83L-18.02 112.71M-32.08 120.83L-32.08 137.06M-46.14 128.95L-46.14 112.71M-46.14 128.95L-60.20 137.06M-46.14 128.95L-32.08 137.06M-18.02 112.71L-32.08 137.06M-18.02 112.71L-3.96 137.06M-3.96 120.83L-18.02 112.71M-3.96 120.83L10.10 112.71M-3.96 120.83L-3.96 137.06M-18.02 128.95L-18.02 112.71M-18.02 128.95L-32.08 137.06M-18.02 128.95L-3.96 137.06M10.10 112.71L-3.96 137.06M10.10 112.71L24.16 137.06M24.16 120.83L10.10 112.71M24.16 120.83L38.22 112.71M24.16 120.83L24.16 137.06M10.10 128.95L10.10 112.71M10.10 128.95L-3.96 137.06M10.10 128.95L24.16 137.06M38.22 112.71L24.16 137.06M38.22 112.71L52.28 137.06M52.28 120.83L38.22 112.71M52.28 120.83L66.34 112.71M52.28 120.83L52.28 137.06M38.22 128.95L38.22 112.71M38.22 128.95L24.16 137.06M38.22 128.95L52.28 137.06M66.34 112.71L52.28 137.06M66.34 112.71L80.40 137.06M80.40 120.83L66.34 112.71M80.40 120.83L94.46 112.71M80.40 120.83L80.40 137.06M66.34 128.95L66.34 112.71M66.34 128.95L52.28 137.06M66.34 128.95L80.40 137.06M94.46 112.71L80.40 137.06M94.46 112.71L108.52 137.06M108.52 120.83L94.46 112.71M108.52 120.83L122.58 112.71M108.52 120.83L108.52 137.06M94.46 128.95L94.46 112.71M94.46 128.95L80.40 137.06M94.46 128.95L108.52 137.06M122.58 112.71L108.52 137.06M122.58 112.71L136.64 137.06M136.64 120.83L122.58 112.71M136.64 120.83L150.70 112.71M136.64 120.83L136.64 137.06M122.58 128.95L122.58 112.71M122.58 128.95L108.52 137.06M122.58 128.95L136.64 137.06M150.70 112.71L136.64 137.06M150.70 112.71L164.76 137.06M164.76 120.83L150.70 112.71M164.76 120.83L178.82 112.71M164.76 120.83L164.76 137.06M150.70 128.95L150.70 112.71M150.70 128.95L136.64 137.06M150.70 128.95L164.76 137.06M178.82 112.71L164.76 137.06M178.82 112.71L192.88 137.06M192.88 120.83L178.82 112.71M192.88 120.83L206.94 112.71M192.88 120.83L192.88 137.06M178.82 128.95L178.82 112.71M178.82 128.95L164.76 137.06M178.82 128.95L192.88 137.06M206.94 112.71L192.88 137.06M206.94 112.71L221.00 137.06M221.00 120.83L206.94 112.71M221.00 120.83L235.06 112.71M221.00 120.83L221.00 137.06M206.94 128.95L206.94 112.71M206.94 128.95L192.88 137.06M206.94 128.95L221.00 137.06M235.06 112.71L221.00 137.06M235.06 112.71L249.12 137.06M249.12 120.83L235.06 112.71M249.12 120.83L263.18 112.71M249.12 120.83L249.12 137.06M235.06 128.95L235.06 112.71M235.06 128.95L221.00 137.06M235.06 128.95L249.12 137.06M263.18 112.71L249.12 137.06M263.18 112.71L277.24 137.06M277.24 120.83L263.18 112.71M277.24 120.83L291.30 112.71M277.24 120.83L277.24 137.06M263.18 128.95L263.18 112.71M263.18 128.95L249.12 137.06M263.18 128.95L277.24 137.06M-5.00 137.06L192.90 137.06M-60.20 137.06L-74.26 161.42M-60.20 137.06L-46.14 161.42M-46.14 145.18L-60.20 137.06M-46.14 145.18L-32.08 137.06M-46.14 145.18L-46.14 161.42M-60.20 153.30L-60.20 137.06M-60.20 153.30L-74.26 161.42M-60.20 153.30L-46.14 161.42M-32.08 137.06L-46.14 161.42M-32.08 137.06L-18.02 161.42M-18.02 145.18L-32.08 137.06M-18.02 145.18L-3.96 137.06M-18.02 145.18L-18.02 161.42M-32.08 153.30L-32.08 137.06M-32.08 153.30L-46.14 161.42M-32.08 153.30L-18.02 161.42M-3.96 137.06L-18.02 161.42M-3.96 137.06L10.10 161.42M10.10 145.18L-3.96 137.06M10.10 145.18L24.16 137.06M10.10 145.18L10.10 161.42M-3.96 153.30L-3.96 137.06M-3.96 153.30L-18.02 161.42M-3.96 153.30L10.10 161.42M24.16 137.06L10.10 161.42M24.16 137.06L38.22 161.42M38.22 145.18L24.16 137.06M38.22 145.18L52.28 137.06M38.22 145.18L38.22 161.42M24.16 153.30L24.16 137.06M24.16 153.30L10.10 161.42M24.16 153.30L38.22 161.42M52.28 137.06L38.22 161.42M52.28 137.06L66.34 161.42M66.34 145.18L52.28 137.06M66.34 145.18L80.40 137.06M66.34 145.18L66.34 161.42M52.28 153.30L52.28 137.06M52.28 153.30L38.22 161.42M52.28 153.30L66.34 161.42M80.40 137.06L66.34 161.42M80.40 137.06L94.46 161.42M94.46 145.18L80.40 137.06M94.46 145.18L108.52 137.06M94.46 145.18L94.46 161.42M80.40 153.30L80.40 137.06M80.40 153.30L66.34 161.42M80.40 153.30L94.46 161.42M108.52 137.06L94.46 161.42M108.52 137.06L122.58 161.42M122.58 145.18L108.52 137.06M122.58 145.18L136.64 137.06M122.58 145.18L122.58 161.42M108.52 153.30L108.52 137.06M108.52 153.30L94.46 161.42M108.52 153.30L122.58 161.42M136.64 137.06L122.58 161.42M136.64 137.06L150.70 161.42M150.70 145.18L136.64 137.06M150.70 145.18L164.76 137.06M150.70 145.18L150.70 161.42M136.64 153.30L136.64 137.06M136.64 153.30L122.58 161.42M136.64 153.30L150.70 161.42M164.76 137.06L150.70 161.42M164.76 137.06L178.82 161.42M178.82 145.18L164.76 137.06M178.82 145.18L192.88 137.06M178.82 145.18L178.82 161.42M164.76 153.30L164.76 137.06M164.76 153.30L150.70 161.42M164.76 153.30L178.82 161.42M192.88 137.06L178.82 161.42M192.88 137.06L206.94 161.42M206.94 145.18L192.88 137.06M206.94 145.18L221.00 137.06M206.94 145.18L206.94 161.42M192.88 153.30L192.88 137.06M192.88 153.30L178.82 161.42M192.88 153.30L206.94 161.42M221.00 137.06L206.94 161.42M221.00 137.06L235.06 161.42M235.06 145.18L221.00 137.06M235.06 145.18L249.12 137.06M235.06 145.18L235.06 161.42M221.00 153.30L221.00 137.06M221.00 153.30L206.94 161.42M221.00 153.30L235.06 161.42M249.12 137.06L235.06 161.42M249.12 137.06L263.18 161.42M263.18 145.18L249.12 137.06M263.18 145.18L277.24 137.06M263.18 145.18L263.18 161.42M249.12 153.30L249.12 137.06M249.12 153.30L235.06 161.42M249.12 153.30L263.18 161.42M277.24 137.06L263.18 161.42M277.24 137.06L291.30 161.42M291.30 145.18L277.24 137.06M291.30 145.18L305.36 137.06M291.30 145.18L291.30 161.42M277.24 153.30L277.24 137.06M277.24 153.30L263.18 161.42M277.24 153.30L291.30 161.42M-5.00 161.42L192.90 161.42M-74.26 161.42L-88.32 185.77M-74.26 161.42L-60.20 185.77M-60.20 169.53L-74.26 161.42M-60.20 169.53L-46.14 161.42M-60.20 169.53L-60.20 185.77M-74.26 177.65L-74.26 161.42M-74.26 177.65L-88.32 185.77M-74.26 177.65L-60.20 185.77M-46.14 161.42L-60.20 185.77M-46.14 161.42L-32.08 185.77M-32.08 169.53L-46.14 161.42M-32.08 169.53L-18.02 161.42M-32.08 169.53L-32.08 185.77M-46.14 177.65L-46.14 161.42M-46.14 177.65L-60.20 185.77M-46.14 177.65L-32.08 185.77M-18.02 161.42L-32.08 185.77M-18.02 161.42L-3.96 185.77M-3.96 169.53L-18.02 161.42M-3.96 169.53L10.10 161.42M-3.96 169.53L-3.96 185.77M-18.02 177.65L-18.02 161.42M-18.02 177.65L-32.08 185.77M-18.02 177.65L-3.96 185.77M10.10 161.42L-3.96 185.77M10.10 161.42L24.16 185.77M24.16 169.53L10.10 161.42M24.16 169.53L38.22 161.42M24.16 169.53L24.16 185.77M10.10 177.65L10.10 161.42M10.10 177.65L-3.96 185.77M10.10 177.65L24.16 185.77M38.22 161.42L24.16 185.77M38.22 161.42L52.28 185.77M52.28 169.53L38.22 161.42M52.28 169.53L66.34 161.42M52.28 169.53L52.28 185.77M38.22 177.65L38.22 161.42M38.22 177.65L24.16 185.77M38.22 177.65L52.28 185.77M66.34 161.42L52.28 185.77M66.34 161.42L80.40 185.77M80.40 169.53L66.34 161.42M80.40 169.53L94.46 161.42M80.40 169.53L80.40 185.77M66.34 177.65L66.34 161.42M66.34 177.65L52.28 185.77M66.34 177.65L80.40 185.77M94.46 161.42L80.40 185.77M94.46 161.42L108.52 185.77M108.52 169.53L94.46 161.42M108.52 169.53L122.58 161.42M108.52 169.53L108.52 185.77M94.46 177.65L94.46 161.42M94.46 177.65L80.40 185.77M94.46 177.65L108.52 185.77M122.58 161.42L108.52 185.77M122.58 161.42L136.64 185.77M136.64 169.53L122.58 161.42M136.64 169.53L150.70 161.42M136.64 169.53L136.64 185.77M122.58 177.65L122.58 161.42M122.58 177.65L108.52 185.77M122.58 177.65L136.64 185.77M150.70 161.42L136.64 185.77M150.70 161.42L164.76 185.77M164.76 169.53L150.70 161.42M164.76 169.53L178.82 161.42M164.76 169.53L164.76 185.77M150.70 177.65L150.70 161.42M150.70 177.65L136.64 185.77M150.70 177.65L164.76 185.77M178.82 161.42L164.76 185.77M178.82 161.42L192.88 185.77M192.88 169.53L178.82 161.42M192.88 169.53L206.94 161.42M192.88 169.53L192.88 185.77M178.82 177.65L178.82 161.42M178.82 177.65L164.76 185.77M178.82 177.65L192.88 185.77M206.94 161.42L192.88 185.77M206.94 161.42L221.00 185.77M221.00 169.53L206.94 161.42M221.00 169.53L235.06 161.42M221.00 169.53L221.00 185.77M206.94 177.65L206.94 161.42M206.94 177.65L192.88 185.77M206.94 177.65L221.00 185.77M235.06 161.42L221.00 185.77M235.06 161.42L249.12 185.77M249.12 169.53L235.06 161.42M249.12 169.53L263.18 161.42M249.12 169.53L249.12 185.77M235.06 177.65L235.06 161.42M235.06 177.65L221.00 185.77M235.06 177.65L249.12 185.77M263.18 161.42L249.12 185.77M263.18 161.42L277.24 185.77M277.24 169.53L263.18 161.42M277.24 169.53L291.30 161.42M277.24 169.53L277.24 185.77M263.18 177.65L263.18 161.42M263.18 177.65L249.12 185.77M263.18 177.65L277.24 185.77M-5.00 185.77L192.90 185.77M-60.20 185.77L-74.26 210.12M-60.20 185.77L-46.14 210.12M-46.14 193.89L-60.20 185.77M-46.14 193.89L-32.08 185.77M-46.14 193.89L-46.14 210.12M-60.20 202.00L-60.20 185.77M-60.20 202.00L-74.26 210.12M-60.20 202.00L-46.14 210.12M-32.08 185.77L-46.14 210.12M-32.08 185.77L-18.02 210.12M-18.02 193.89L-32.08 185.77M-18.02 193.89L-3.96 185.77M-18.02 193.89L-18.02 210.12M-32.08 202.00L-32.08 185.77M-32.08 202.00L-46.14 210.12M-32.08 202.00L-18.02 210.12M-3.96 185.77L-18.02 210.12M-3.96 185.77L10.10 210.12M10.10 193.89L-3.96 185.77M10.10 193.89L24.16 185.77M10.10 193.89L10.10 210.12M-3.96 202.00L-3.96 185.77M-3.96 202.00L-18.02 210.12M-3.96 202.00L10.10 210.12M24.16 185.77L10.10 210.12M24.16 185.77L38.22 210.12M38.22 193.89L24.16 185.77M38.22 193.89L52.28 185.77M38.22 193.89L38.22 210.12M24.16 202.00L24.16 185.77M24.16 202.00L10.10 210.12M24.16 202.00L38.22 210.12M52.28 185.77L38.22 210.12M52.28 185.77L66.34 210.12M66.34 193.89L52.28 185.77M66.34 193.89L80.40 185.77M66.34 193.89L66.34 210.12M52.28 202.00L52.28 185.77M52.28 202.00L38.22 210.12M52.28 202.00L66.34 210.12M80.40 185.77L66.34 210.12M80.40 185.77L94.46 210.12M94.46 193.89L80.40 185.77M94.46 193.89L108.52 185.77M94.46 193.89L94.46 210.12M80.40 202.00L80.40 185.77M80.40 202.00L66.34 210.12M80.40 202.00L94.46 210.12M108.52 185.77L94.46 210.12M108.52 185.77L122.58 210.12M122.58 193.89L108.52 185.77M122.58 193.89L136.64 185.77M122.58 193.89L122.58 210.12M108.52 202.00L108.52 185.77M108.52 202.00L94.46 210.12M108.52 202.00L122.58 210.12M136.64 185.77L122.58 210.12M136.64 185.77L150.70 210.12M150.70 193.89L136.64 185.77M150.70 193.89L164.76 185.77M150.70 193.89L150.70 210.12M136.64 202.00L136.64 185.77M136.64 202.00L122.58 210.12M136.64 202.00L150.70 210.12M164.76 185.77L150.70 210.12M164.76 185.77L178.82 210.12M178.82 193.89L164.76 185.77M178.82 193.89L192.88 185.77M178.82 193.89L178.82 210.12M164.76 202.00L164.76 185.77M164.76 202.00L150.70 210.12M164.76 202.00L178.82 210.12M192.88 185.77L178.82 210.12M192.88 185.77L206.94 210.12M206.94 193.89L192.88 185.77M206.94 193.89L221.00 185.77M206.94 193.89L206.94 210.12M192.88 202.00L192.88 185.77M192.88 202.00L178.82 210.12M192.88 202.00L206.94 210.12M221.00 185.77L206.94 210.12M221.00 185.77L235.06 210.12M235.06 193.89L221.00 185.77M235.06 193.89L249.12 185.77M235.06 193.89L235.06 210.12M221.00 202.00L221.00 185.77M221.00 202.00L206.94 210.12M221.00 202.00L235.06 210.12M249.12 185.77L235.06 210.12M249.12 185.77L263.18 210.12M263.18 193.89L249.12 185.77M263.18 193.89L277.24 185.77M263.18 193.89L263.18 210.12M249.12 202.00L249.12 185.77M249.12 202.00L235.06 210.12M249.12 202.00L263.18 210.12M277.24 185.77L263.18 210.12M277.24 185.77L291.30 210.12M291.30 193.89L277.24 185.77M291.30 193.89L305.36 185.77M291.30 193.89L291.30 210.12M277.24 202.00L277.24 185.77M277.24 202.00L263.18 210.12M277.24 202.00L291.30 210.12M-5.00 210.12L192.90 210.12M-74.26 210.12L-88.32 234.47M-74.26 210.12L-60.20 234.47M-60.20 218.24L-74.26 210.12M-60.20 218.24L-46.14 210.12M-60.20 218.24L-60.20 234.47M-74.26 226.36L-74.26 210.12M-74.26 226.36L-88.32 234.47M-74.26 226.36L-60.20 234.47M-46.14 210.12L-60.20 234.47M-46.14 210.12L-32.08 234.47M-32.08 218.24L-46.14 210.12M-32.08 218.24L-18.02 210.12M-32.08 218.24L-32.08 234.47M-46.14 226.36L-46.14 210.12M-46.14 226.36L-60.20 234.47M-46.14 226.36L-32.08 234.47M-18.02 210.12L-32.08 234.47M-18.02 210.12L-3.96 234.47M-3.96 218.24L-18.02 210.12M-3.96 218.24L10.10 210.12M-3.96 218.24L-3.96 234.47M-18.02 226.36L-18.02 210.12M-18.02 226.36L-32.08 234.47M-18.02 226.36L-3.96 234.47M10.10 210.12L-3.96 234.47M10.10 210.12L24.16 234.47M24.16 218.24L10.10 210.12M24.16 218.24L38.22 210.12M24.16 218.24L24.16 234.47M10.10 226.36L10.10 210.12M10.10 226.36L-3.96 234.47M10.10 226.36L24.16 234.47M38.22 210.12L24.16 234.47M38.22 210.12L52.28 234.47M52.28 218.24L38.22 210.12M52.28 218.24L66.34 210.12M52.28 218.24L52.28 234.47M38.22 226.36L38.22 210.12M38.22 226.36L24.16 234.47M38.22 226.36L52.28 234.47M66.34 210.12L52.28 234.47M66.34 210.12L80.40 234.47M80.40 218.24L66.34 210.12M80.40 218.24L94.46 210.12M80.40 218.24L80.40 234.47M66.34 226.36L66.34 210.12M66.34 226.36L52.28 234.47M66.34 226.36L80.40 234.47M94.46 210.12L80.40 234.47M94.46 210.12L108.52 234.47M108.52 218.24L94.46 210.12M108.52 218.24L122.58 210.12M108.52 218.24L108.52 234.47M94.46 226.36L94.46 210.12M94.46 226.36L80.40 234.47M94.46 226.36L108.52 234.47M122.58 210.12L108.52 234.47M122.58 210.12L136.64 234.47M136.64 218.24L122.58 210.12M136.64 218.24L150.70 210.12M136.64 218.24L136.64 234.47M122.58 226.36L122.58 210.12M122.58 226.36L108.52 234.47M122.58 226.36L136.64 234.47M150.70 210.12L136.64 234.47M150.70 210.12L164.76 234.47M164.76 218.24L150.70 210.12M164.76 218.24L178.82 210.12M164.76 218.24L164.76 234.47M150.70 226.36L150.70 210.12M150.70 226.36L136.64 234.47M150.70 226.36L164.76 234.47M178.82 210.12L164.76 234.47M178.82 210.12L192.88 234.47M192.88 218.24L178.82 210.12M192.88 218.24L206.94 210.12M192.88 218.24L192.88 234.47M178.82 226.36L178.82 210.12M178.82 226.36L164.76 234.47M178.82 226.36L192.88 234.47M206.94 210.12L192.88 234.47M206.94 210.12L221.00 234.47M221.00 218.24L206.94 210.12M221.00 218.24L235.06 210.12M221.00 218.24L221.00 234.47M206.94 226.36L206.94 210.12M206.94 226.36L192.88 234.47M206.94 226.36L221.00 234.47M235.06 210.12L221.00 234.47M235.06 210.12L249.12 234.47M249.12 218.24L235.06 210.12M249.12 218.24L263.18 210.12M249.12 218.24L249.12 234.47M235.06 226.36L235.06 210.12M235.06 226.36L221.00 234.47M235.06 226.36L249.12 234.47M263.18 210.12L249.12 234.47M263.18 210.12L277.24 234.47M277.24 218.24L263.18 210.12M277.24 218.24L291.30 210.12M277.24 218.24L277.24 234.47M263.18 226.36L263.18 210.12M263.18 226.36L249.12 234.47M263.18 226.36L277.24 234.47M-5.00 234.47L192.90 234.47M-60.20 234.47L-74.26 258.83M-60.20 234.47L-46.14 258.83M-46.14 242.59L-60.20 234.47M-46.14 242.59L-32.08 234.47M-46.14 242.59L-46.14 258.83M-60.20 250.71L-60.20 234.47M-60.20 250.71L-74.26 258.83M-60.20 250.71L-46.14 258.83M-32.08 234.47L-46.14 258.83M-32.08 234.47L-18.02 258.83M-18.02 242.59L-32.08 234.47M-18.02 242.59L-3.96 234.47M-18.02 242.59L-18.02 258.83M-32.08 250.71L-32.08 234.47M-32.08 250.71L-46.14 258.83M-32.08 250.71L-18.02 258.83M-3.96 234.47L-18.02 258.83M-3.96 234.47L10.10 258.83M10.10 242.59L-3.96 234.47M10.10 242.59L24.16 234.47M10.10 242.59L10.10 258.83M-3.96 250.71L-3.96 234.47M-3.96 250.71L-18.02 258.83M-3.96 250.71L10.10 258.83M24.16 234.47L10.10 258.83M24.16 234.47L38.22 258.83M38.22 242.59L24.16 234.47M38.22 242.59L52.28 234.47M38.22 242.59L38.22 258.83M24.16 250.71L24.16 234.47M24.16 250.71L10.10 258.83M24.16 250.71L38.22 258.83M52.28 234.47L38.22 258.83M52.28 234.47L66.34 258.83M66.34 242.59L52.28 234.47M66.34 242.59L80.40 234.47M66.34 242.59L66.34 258.83M52.28 250.71L52.28 234.47M52.28 250.71L38.22 258.83M52.28 250.71L66.34 258.83M80.40 234.47L66.34 258.83M80.40 234.47L94.46 258.83M94.46 242.59L80.40 234.47M94.46 242.59L108.52 234.47M94.46 242.59L94.46 258.83M80.40 250.71L80.40 234.47M80.40 250.71L66.34 258.83M80.40 250.71L94.46 258.83M108.52 234.47L94.46 258.83M108.52 234.47L122.58 258.83M122.58 242.59L108.52 234.47M122.58 242.59L136.64 234.47M122.58 242.59L122.58 258.83M108.52 250.71L108.52 234.47M108.52 250.71L94.46 258.83M108.52 250.71L122.58 258.83M136.64 234.47L122.58 258.83M136.64 234.47L150.70 258.83M150.70 242.59L136.64 234.47M150.70 242.59L164.76 234.47M150.70 242.59L150.70 258.83M136.64 250.71L136.64 234.47M136.64 250.71L122.58 258.83M136.64 250.71L150.70 258.83M164.76 234.47L150.70 258.83M164.76 234.47L178.82 258.83M178.82 242.59L164.76 234.47M178.82 242.59L192.88 234.47M178.82 242.59L178.82 258.83M164.76 250.71L164.76 234.47M164.76 250.71L150.70 258.83M164.76 250.71L178.82 258.83M192.88 234.47L178.82 258.83M192.88 234.47L206.94 258.83M206.94 242.59L192.88 234.47M206.94 242.59L221.00 234.47M206.94 242.59L206.94 258.83M192.88 250.71L192.88 234.47M192.88 250.71L178.82 258.83M192.88 250.71L206.94 258.83M221.00 234.47L206.94 258.83M221.00 234.47L235.06 258.83M235.06 242.59L221.00 234.47M235.06 242.59L249.12 234.47M235.06 242.59L235.06 258.83M221.00 250.71L221.00 234.47M221.00 250.71L206.94 258.83M221.00 250.71L235.06 258.83M249.12 234.47L235.06 258.83M249.12 234.47L263.18 258.83M263.18 242.59L249.12 234.47M263.18 242.59L277.24 234.47M263.18 242.59L263.18 258.83M249.12 250.71L249.12 234.47M249.12 250.71L235.06 258.83M249.12 250.71L263.18 258.83M277.24 234.47L263.18 258.83M277.24 234.47L291.30 258.83M291.30 242.59L277.24 234.47M291.30 242.59L305.36 234.47M291.30 242.59L291.30 258.83M277.24 250.71L277.24 234.47M277.24 250.71L263.18 258.83M277.24 250.71L291.30 258.83" stroke="#8fcbe0" stroke-width="1.0" fill="none"/><g fill="#5aaed0"><circle cx="-60.20" cy="-57.76" r="0.9"/><circle cx="-32.08" cy="-57.76" r="0.9"/><circle cx="-3.96" cy="-57.76" r="0.9"/><circle cx="24.16" cy="-57.76" r="0.9"/><circle cx="52.28" cy="-57.76" r="0.9"/><circle cx="80.40" cy="-57.76" r="0.9"/><circle cx="108.52" cy="-57.76" r="0.9"/><circle cx="136.64" cy="-57.76" r="0.9"/><circle cx="164.76" cy="-57.76" r="0.9"/><circle cx="192.88" cy="-57.76" r="0.9"/><circle cx="221.00" cy="-57.76" r="0.9"/><circle cx="249.12" cy="-57.76" r="0.9"/><circle cx="277.24" cy="-57.76" r="0.9"/><circle cx="-74.26" cy="-33.41" r="0.9"/><circle cx="-46.14" cy="-33.41" r="0.9"/><circle cx="-18.02" cy="-33.41" r="0.9"/><circle cx="10.10" cy="-33.41" r="0.9"/><circle cx="38.22" cy="-33.41" r="0.9"/><circle cx="66.34" cy="-33.41" r="0.9"/><circle cx="94.46" cy="-33.41" r="0.9"/><circle cx="122.58" cy="-33.41" r="0.9"/><circle cx="150.70" cy="-33.41" r="0.9"/><circle cx="178.82" cy="-33.41" r="0.9"/><circle cx="206.94" cy="-33.41" r="0.9"/><circle cx="235.06" cy="-33.41" r="0.9"/><circle cx="263.18" cy="-33.41" r="0.9"/><circle cx="-60.20" cy="-9.05" r="0.9"/><circle cx="-32.08" cy="-9.05" r="0.9"/><circle cx="-3.96" cy="-9.05" r="0.9"/><circle cx="24.16" cy="-9.05" r="0.9"/><circle cx="52.28" cy="-9.05" r="0.9"/><circle cx="80.40" cy="-9.05" r="0.9"/><circle cx="108.52" cy="-9.05" r="0.9"/><circle cx="136.64" cy="-9.05" r="0.9"/><circle cx="164.76" cy="-9.05" r="0.9"/><circle cx="192.88" cy="-9.05" r="0.9"/><circle cx="221.00" cy="-9.05" r="0.9"/><circle cx="249.12" cy="-9.05" r="0.9"/><circle cx="277.24" cy="-9.05" r="0.9"/><circle cx="-74.26" cy="15.30" r="0.9"/><circle cx="-46.14" cy="15.30" r="0.9"/><circle cx="-18.02" cy="15.30" r="0.9"/><circle cx="10.10" cy="15.30" r="0.9"/><circle cx="38.22" cy="15.30" r="0.9"/><circle cx="66.34" cy="15.30" r="0.9"/><circle cx="94.46" cy="15.30" r="0.9"/><circle cx="122.58" cy="15.30" r="0.9"/><circle cx="150.70" cy="15.30" r="0.9"/><circle cx="178.82" cy="15.30" r="0.9"/><circle cx="206.94" cy="15.30" r="0.9"/><circle cx="235.06" cy="15.30" r="0.9"/><circle cx="263.18" cy="15.30" r="0.9"/><circle cx="-60.20" cy="39.65" r="0.9"/><circle cx="-32.08" cy="39.65" r="0.9"/><circle cx="-3.96" cy="39.65" r="0.9"/><circle cx="24.16" cy="39.65" r="0.9"/><circle cx="52.28" cy="39.65" r="0.9"/><circle cx="80.40" cy="39.65" r="0.9"/><circle cx="108.52" cy="39.65" r="0.9"/><circle cx="136.64" cy="39.65" r="0.9"/><circle cx="164.76" cy="39.65" r="0.9"/><circle cx="192.88" cy="39.65" r="0.9"/><circle cx="221.00" cy="39.65" r="0.9"/><circle cx="249.12" cy="39.65" r="0.9"/><circle cx="277.24" cy="39.65" r="0.9"/><circle cx="-74.26" cy="64.01" r="0.9"/><circle cx="-46.14" cy="64.01" r="0.9"/><circle cx="-18.02" cy="64.01" r="0.9"/><circle cx="10.10" cy="64.01" r="0.9"/><circle cx="38.22" cy="64.01" r="0.9"/><circle cx="66.34" cy="64.01" r="0.9"/><circle cx="94.46" cy="64.01" r="0.9"/><circle cx="122.58" cy="64.01" r="0.9"/><circle cx="150.70" cy="64.01" r="0.9"/><circle cx="178.82" cy="64.01" r="0.9"/><circle cx="206.94" cy="64.01" r="0.9"/><circle cx="235.06" cy="64.01" r="0.9"/><circle cx="263.18" cy="64.01" r="0.9"/><circle cx="-60.20" cy="88.36" r="0.9"/><circle cx="-32.08" cy="88.36" r="0.9"/><circle cx="-3.96" cy="88.36" r="0.9"/><circle cx="24.16" cy="88.36" r="0.9"/><circle cx="52.28" cy="88.36" r="0.9"/><circle cx="80.40" cy="88.36" r="0.9"/><circle cx="108.52" cy="88.36" r="0.9"/><circle cx="136.64" cy="88.36" r="0.9"/><circle cx="164.76" cy="88.36" r="0.9"/><circle cx="192.88" cy="88.36" r="0.9"/><circle cx="221.00" cy="88.36" r="0.9"/><circle cx="249.12" cy="88.36" r="0.9"/><circle cx="277.24" cy="88.36" r="0.9"/><circle cx="-74.26" cy="112.71" r="0.9"/><circle cx="-46.14" cy="112.71" r="0.9"/><circle cx="-18.02" cy="112.71" r="0.9"/><circle cx="10.10" cy="112.71" r="0.9"/><circle cx="38.22" cy="112.71" r="0.9"/><circle cx="66.34" cy="112.71" r="0.9"/><circle cx="94.46" cy="112.71" r="0.9"/><circle cx="122.58" cy="112.71" r="0.9"/><circle cx="150.70" cy="112.71" r="0.9"/><circle cx="178.82" cy="112.71" r="0.9"/><circle cx="206.94" cy="112.71" r="0.9"/><circle cx="235.06" cy="112.71" r="0.9"/><circle cx="263.18" cy="112.71" r="0.9"/><circle cx="-60.20" cy="137.06" r="0.9"/><circle cx="-32.08" cy="137.06" r="0.9"/><circle cx="-3.96" cy="137.06" r="0.9"/><circle cx="24.16" cy="137.06" r="0.9"/><circle cx="52.28" cy="137.06" r="0.9"/><circle cx="80.40" cy="137.06" r="0.9"/><circle cx="108.52" cy="137.06" r="0.9"/><circle cx="136.64" cy="137.06" r="0.9"/><circle cx="164.76" cy="137.06" r="0.9"/><circle cx="192.88" cy="137.06" r="0.9"/><circle cx="221.00" cy="137.06" r="0.9"/><circle cx="249.12" cy="137.06" r="0.9"/><circle cx="277.24" cy="137.06" r="0.9"/><circle cx="-74.26" cy="161.42" r="0.9"/><circle cx="-46.14" cy="161.42" r="0.9"/><circle cx="-18.02" cy="161.42" r="0.9"/><circle cx="10.10" cy="161.42" r="0.9"/><circle cx="38.22" cy="161.42" r="0.9"/><circle cx="66.34" cy="161.42" r="0.9"/><circle cx="94.46" cy="161.42" r="0.9"/><circle cx="122.58" cy="161.42" r="0.9"/><circle cx="150.70" cy="161.42" r="0.9"/><circle cx="178.82" cy="161.42" r="0.9"/><circle cx="206.94" cy="161.42" r="0.9"/><circle cx="235.06" cy="161.42" r="0.9"/><circle cx="263.18" cy="161.42" r="0.9"/><circle cx="-60.20" cy="185.77" r="0.9"/><circle cx="-32.08" cy="185.77" r="0.9"/><circle cx="-3.96" cy="185.77" r="0.9"/><circle cx="24.16" cy="185.77" r="0.9"/><circle cx="52.28" cy="185.77" r="0.9"/><circle cx="80.40" cy="185.77" r="0.9"/><circle cx="108.52" cy="185.77" r="0.9"/><circle cx="136.64" cy="185.77" r="0.9"/><circle cx="164.76" cy="185.77" r="0.9"/><circle cx="192.88" cy="185.77" r="0.9"/><circle cx="221.00" cy="185.77" r="0.9"/><circle cx="249.12" cy="185.77" r="0.9"/><circle cx="277.24" cy="185.77" r="0.9"/><circle cx="-74.26" cy="210.12" r="0.9"/><circle cx="-46.14" cy="210.12" r="0.9"/><circle cx="-18.02" cy="210.12" r="0.9"/><circle cx="10.10" cy="210.12" r="0.9"/><circle cx="38.22" cy="210.12" r="0.9"/><circle cx="66.34" cy="210.12" r="0.9"/><circle cx="94.46" cy="210.12" r="0.9"/><circle cx="122.58" cy="210.12" r="0.9"/><circle cx="150.70" cy="210.12" r="0.9"/><circle cx="178.82" cy="210.12" r="0.9"/><circle cx="206.94" cy="210.12" r="0.9"/><circle cx="235.06" cy="210.12" r="0.9"/><circle cx="263.18" cy="210.12" r="0.9"/><circle cx="-60.20" cy="234.47" r="0.9"/><circle cx="-32.08" cy="234.47" r="0.9"/><circle cx="-3.96" cy="234.47" r="0.9"/><circle cx="24.16" cy="234.47" r="0.9"/><circle cx="52.28" cy="234.47" r="0.9"/><circle cx="80.40" cy="234.47" r="0.9"/><circle cx="108.52" cy="234.47" r="0.9"/><circle cx="136.64" cy="234.47" r="0.9"/><circle cx="164.76" cy="234.47" r="0.9"/><circle cx="192.88" cy="234.47" r="0.9"/><circle cx="221.00" cy="234.47" r="0.9"/><circle cx="249.12" cy="234.47" r="0.9"/><circle cx="277.24" cy="234.47" r="0.9"/></g></svg><div class="t" style="left:49.8px;top:198.3px;font-size:17.6px;color:#000;-webkit-text-stroke:0px #000;color:#000;letter-spacing:-0.25px">Shop Name</div>
<svg width="44.40" height="44.40" style="position:absolute;left:18.50px;top:234.90px" viewBox="0 0 29 29" shape-rendering="auto"><path d="M0 0h7v1h-7zM8 0h5v1h-5zM14 0h2v1h-2zM19 0h1v1h-1zM22 0h7v1h-7zM0 1h1v1h-1zM6 1h1v1h-1zM8 1h2v1h-2zM11 1h2v1h-2zM15 1h1v1h-1zM20 1h1v1h-1zM22 1h1v1h-1zM28 1h1v1h-1zM0 2h1v1h-1zM2 2h3v1h-3zM6 2h1v1h-1zM10 2h1v1h-1zM12 2h1v1h-1zM17 2h2v1h-2zM20 2h1v1h-1zM22 2h1v1h-1zM24 2h3v1h-3zM28 2h1v1h-1zM0 3h1v1h-1zM2 3h3v1h-3zM6 3h1v1h-1zM8 3h2v1h-2zM12 3h5v1h-5zM18 3h3v1h-3zM22 3h1v1h-1zM24 3h3v1h-3zM28 3h1v1h-1zM0 4h1v1h-1zM2 4h3v1h-3zM6 4h1v1h-1zM8 4h11v1h-11zM22 4h1v1h-1zM24 4h3v1h-3zM28 4h1v1h-1zM0 5h1v1h-1zM6 5h1v1h-1zM10 5h1v1h-1zM12 5h1v1h-1zM17 5h3v1h-3zM22 5h1v1h-1zM28 5h1v1h-1zM0 6h7v1h-7zM8 6h1v1h-1zM11 6h1v1h-1zM15 6h5v1h-5zM22 6h7v1h-7zM8 7h2v1h-2zM12 7h3v1h-3zM17 7h1v1h-1zM0 8h1v1h-1zM3 8h4v1h-4zM8 8h3v1h-3zM12 8h2v1h-2zM16 8h1v1h-1zM21 8h4v1h-4zM26 8h2v1h-2zM1 9h1v1h-1zM5 9h1v1h-1zM7 9h2v1h-2zM14 9h1v1h-1zM19 9h1v1h-1zM21 9h1v1h-1zM26 9h1v1h-1zM1 10h6v1h-6zM10 10h1v1h-1zM13 10h1v1h-1zM16 10h1v1h-1zM18 10h2v1h-2zM22 10h2v1h-2zM25 10h3v1h-3zM0 11h1v1h-1zM2 11h3v1h-3zM7 11h1v1h-1zM11 11h3v1h-3zM15 11h3v1h-3zM20 11h2v1h-2zM25 11h2v1h-2zM28 11h1v1h-1zM0 12h1v1h-1zM4 12h1v1h-1zM6 12h1v1h-1zM8 12h2v1h-2zM12 12h2v1h-2zM15 12h7v1h-7zM23 12h1v1h-1zM25 12h4v1h-4zM0 13h1v1h-1zM3 13h2v1h-2zM6 13h1v1h-1zM8 13h2v1h-2zM11 13h1v1h-1zM15 13h1v1h-1zM19 13h5v1h-5zM25 13h3v1h-3zM2 14h7v1h-7zM12 14h1v1h-1zM14 14h5v1h-5zM20 14h1v1h-1zM22 14h7v1h-7zM0 15h1v1h-1zM7 15h2v1h-2zM10 15h1v1h-1zM13 15h1v1h-1zM19 15h1v1h-1zM0 16h5v1h-5zM10 16h2v1h-2zM17 16h1v1h-1zM19 16h3v1h-3zM23 16h1v1h-1zM26 16h3v1h-3zM4 17h3v1h-3zM8 17h1v1h-1zM10 17h3v1h-3zM16 17h1v1h-1zM18 17h3v1h-3zM22 17h1v1h-1zM25 17h2v1h-2zM0 18h3v1h-3zM4 18h1v1h-1zM6 18h1v1h-1zM9 18h1v1h-1zM14 18h1v1h-1zM16 18h9v1h-9zM26 18h1v1h-1zM0 19h1v1h-1zM4 19h3v1h-3zM9 19h5v1h-5zM15 19h1v1h-1zM17 19h2v1h-2zM20 19h2v1h-2zM1 20h1v1h-1zM3 20h1v1h-1zM6 20h2v1h-2zM9 20h4v1h-4zM15 20h1v1h-1zM17 20h1v1h-1zM19 20h7v1h-7zM28 20h1v1h-1zM10 21h2v1h-2zM13 21h4v1h-4zM18 21h1v1h-1zM20 21h1v1h-1zM24 21h3v1h-3zM0 22h7v1h-7zM8 22h1v1h-1zM13 22h3v1h-3zM20 22h1v1h-1zM22 22h1v1h-1zM24 22h1v1h-1zM26 22h1v1h-1zM0 23h1v1h-1zM6 23h1v1h-1zM9 23h2v1h-2zM12 23h3v1h-3zM18 23h3v1h-3zM24 23h2v1h-2zM27 23h2v1h-2zM0 24h1v1h-1zM2 24h3v1h-3zM6 24h1v1h-1zM11 24h1v1h-1zM13 24h1v1h-1zM15 24h2v1h-2zM18 24h1v1h-1zM20 24h5v1h-5zM26 24h3v1h-3zM0 25h1v1h-1zM2 25h3v1h-3zM6 25h1v1h-1zM10 25h2v1h-2zM14 25h1v1h-1zM16 25h7v1h-7zM24 25h1v1h-1zM26 25h2v1h-2zM0 26h1v1h-1zM2 26h3v1h-3zM6 26h1v1h-1zM9 26h2v1h-2zM13 26h3v1h-3zM17 26h1v1h-1zM20 26h2v1h-2zM24 26h1v1h-1zM26 26h3v1h-3zM0 27h1v1h-1zM6 27h1v1h-1zM9 27h4v1h-4zM14 27h1v1h-1zM20 27h3v1h-3zM24 27h2v1h-2zM27 27h2v1h-2zM0 28h7v1h-7zM8 28h2v1h-2zM11 28h3v1h-3zM19 28h1v1h-1zM21 28h1v1h-1zM23 28h1v1h-1zM25 28h4v1h-4z" fill="#333"/></svg>
<div class="t" style="left:71.1px;top:240px;font-size:6.5px;color:#8a8a8a;line-height:8.1px">By accessing the QRcode,<br>you agree to the access analysis.</div>
<div class="t" style="left:70.4px;top:265.2px;font-size:6.9px;color:#55b2e3;letter-spacing:-0.35px"><span style="color:#1e3f86;font-size:9px;font-weight:bold;font-style:italic">W</span><span style="color:#2b6cb8;font-weight:bold">orld</span>Shopping</div>
<div class="t" style="left:116.5px;top:268.9px;font-size:5.5px;color:#999;letter-spacing:0.05px">Purchasing Supporter</div>
</div>
<div class="a" style="left:118.8px;top:64px;width:4px;height:297.7px;background:#dadce0;border-radius:2px"></div>

<!-- rulers -->
<div class="a" style="left:134px;top:72px;width:534px;height:1px;background:#dadce0"></div>
<div class="a" style="left:134px;top:72px;width:1px;height:319px;background:#b9bcc0"></div>
<div class="tick" style="left:313.15px;top:70.3px;width:0.7px;height:2.2px"></div>
<div class="tick" style="left:320.83px;top:70.3px;width:0.7px;height:2.2px"></div>
<div class="tick" style="left:328.51px;top:67.9px;width:0.7px;height:4.6px"></div>
<div class="tick" style="left:336.19px;top:70.3px;width:0.7px;height:2.2px"></div>
<div class="tick" style="left:343.87px;top:70.3px;width:0.7px;height:2.2px"></div>
<div class="t" style="left:339.22px;top:63.1px;font-size:6.9px;color:#474a4d;width:10px;text-align:center">1</div>
<div class="tick" style="left:351.55px;top:70.3px;width:0.7px;height:2.2px"></div>
<div class="tick" style="left:359.23px;top:67.9px;width:0.7px;height:4.6px"></div>
<div class="tick" style="left:366.91px;top:70.3px;width:0.7px;height:2.2px"></div>
<div class="tick" style="left:374.59px;top:70.3px;width:0.7px;height:2.2px"></div>
<div class="t" style="left:369.94px;top:63.1px;font-size:6.9px;color:#474a4d;width:10px;text-align:center">2</div>
<div class="tick" style="left:382.27px;top:70.3px;width:0.7px;height:2.2px"></div>
<div class="tick" style="left:389.95px;top:67.9px;width:0.7px;height:4.6px"></div>
<div class="tick" style="left:397.63px;top:70.3px;width:0.7px;height:2.2px"></div>
<div class="tick" style="left:405.31px;top:70.3px;width:0.7px;height:2.2px"></div>
<div class="t" style="left:400.66px;top:63.1px;font-size:6.9px;color:#474a4d;width:10px;text-align:center">3</div>
<div class="tick" style="left:412.99px;top:70.3px;width:0.7px;height:2.2px"></div>
<div class="tick" style="left:420.67px;top:67.9px;width:0.7px;height:4.6px"></div>
<div class="tick" style="left:428.35px;top:70.3px;width:0.7px;height:2.2px"></div>
<div class="tick" style="left:436.03px;top:70.3px;width:0.7px;height:2.2px"></div>
<div class="t" style="left:431.38px;top:63.1px;font-size:6.9px;color:#474a4d;width:10px;text-align:center">4</div>
<div class="tick" style="left:443.71px;top:70.3px;width:0.7px;height:2.2px"></div>
<div class="tick" style="left:451.39px;top:67.9px;width:0.7px;height:4.6px"></div>
<div class="tick" style="left:459.07px;top:70.3px;width:0.7px;height:2.2px"></div>
<div class="tick" style="left:466.75px;top:70.3px;width:0.7px;height:2.2px"></div>
<div class="t" style="left:462.10px;top:63.1px;font-size:6.9px;color:#474a4d;width:10px;text-align:center">5</div>
<div class="tick" style="left:474.43px;top:70.3px;width:0.7px;height:2.2px"></div>
<div class="tick" style="left:482.11px;top:67.9px;width:0.7px;height:4.6px"></div>
<div class="tick" style="left:489.79px;top:70.3px;width:0.7px;height:2.2px"></div>
<div class="tick" style="left:497.47px;top:70.3px;width:0.7px;height:2.2px"></div>
<div class="t" style="left:492.82px;top:63.1px;font-size:6.9px;color:#474a4d;width:10px;text-align:center">6</div>
<div class="tick" style="left:132.2px;top:83.25px;width:2.2px;height:0.7px"></div>
<div class="tick" style="left:132.2px;top:90.93px;width:2.2px;height:0.7px"></div>
<div class="tick" style="left:129.8px;top:98.61px;width:4.6px;height:0.7px"></div>
<div class="tick" style="left:132.2px;top:106.29px;width:2.2px;height:0.7px"></div>
<div class="tick" style="left:132.2px;top:113.97px;width:2.2px;height:0.7px"></div>
<div class="t" style="left:123.7px;top:110.82px;font-size:6.9px;color:#474a4d;width:10px;text-align:center;transform:rotate(-90deg)">1</div>
<div class="tick" style="left:132.2px;top:121.65px;width:2.2px;height:0.7px"></div>
<div class="tick" style="left:129.8px;top:129.33px;width:4.6px;height:0.7px"></div>
<div class="tick" style="left:132.2px;top:137.01px;width:2.2px;height:0.7px"></div>
<div class="tick" style="left:132.2px;top:144.69px;width:2.2px;height:0.7px"></div>
<div class="t" style="left:123.7px;top:141.54px;font-size:6.9px;color:#474a4d;width:10px;text-align:center;transform:rotate(-90deg)">2</div>
<div class="tick" style="left:132.2px;top:152.37px;width:2.2px;height:0.7px"></div>
<div class="tick" style="left:129.8px;top:160.05px;width:4.6px;height:0.7px"></div>
<div class="tick" style="left:132.2px;top:167.73px;width:2.2px;height:0.7px"></div>
<div class="tick" style="left:132.2px;top:175.41px;width:2.2px;height:0.7px"></div>
<div class="t" style="left:123.7px;top:172.26px;font-size:6.9px;color:#474a4d;width:10px;text-align:center;transform:rotate(-90deg)">3</div>
<div class="tick" style="left:132.2px;top:183.09px;width:2.2px;height:0.7px"></div>
<div class="tick" style="left:129.8px;top:190.77px;width:4.6px;height:0.7px"></div>
<div class="tick" style="left:132.2px;top:198.45px;width:2.2px;height:0.7px"></div>
<div class="tick" style="left:132.2px;top:206.13px;width:2.2px;height:0.7px"></div>
<div class="t" style="left:123.7px;top:202.98px;font-size:6.9px;color:#474a4d;width:10px;text-align:center;transform:rotate(-90deg)">4</div>
<div class="tick" style="left:132.2px;top:213.81px;width:2.2px;height:0.7px"></div>
<div class="tick" style="left:129.8px;top:221.49px;width:4.6px;height:0.7px"></div>
<div class="tick" style="left:132.2px;top:229.17px;width:2.2px;height:0.7px"></div>
<div class="tick" style="left:132.2px;top:236.85px;width:2.2px;height:0.7px"></div>
<div class="t" style="left:123.7px;top:233.70px;font-size:6.9px;color:#474a4d;width:10px;text-align:center;transform:rotate(-90deg)">5</div>
<div class="tick" style="left:132.2px;top:244.53px;width:2.2px;height:0.7px"></div>
<div class="tick" style="left:129.8px;top:252.21px;width:4.6px;height:0.7px"></div>
<div class="tick" style="left:132.2px;top:259.89px;width:2.2px;height:0.7px"></div>
<div class="tick" style="left:132.2px;top:267.57px;width:2.2px;height:0.7px"></div>
<div class="t" style="left:123.7px;top:264.42px;font-size:6.9px;color:#474a4d;width:10px;text-align:center;transform:rotate(-90deg)">6</div>
<div class="tick" style="left:132.2px;top:275.25px;width:2.2px;height:0.7px"></div>
<div class="tick" style="left:129.8px;top:282.93px;width:4.6px;height:0.7px"></div>
<div class="tick" style="left:132.2px;top:290.61px;width:2.2px;height:0.7px"></div>
<div class="tick" style="left:132.2px;top:298.29px;width:2.2px;height:0.7px"></div>
<div class="t" style="left:123.7px;top:295.14px;font-size:6.9px;color:#474a4d;width:10px;text-align:center;transform:rotate(-90deg)">7</div>
<div class="tick" style="left:132.2px;top:305.97px;width:2.2px;height:0.7px"></div>
<div class="tick" style="left:129.8px;top:313.65px;width:4.6px;height:0.7px"></div>
<div class="tick" style="left:132.2px;top:321.33px;width:2.2px;height:0.7px"></div>
<div class="tick" style="left:132.2px;top:329.01px;width:2.2px;height:0.7px"></div>
<div class="t" style="left:123.7px;top:325.86px;font-size:6.9px;color:#474a4d;width:10px;text-align:center;transform:rotate(-90deg)">8</div>
<div class="tick" style="left:132.2px;top:336.69px;width:2.2px;height:0.7px"></div>
<div class="tick" style="left:129.8px;top:344.37px;width:4.6px;height:0.7px"></div>
<div class="tick" style="left:132.2px;top:352.05px;width:2.2px;height:0.7px"></div>
<div class="tick" style="left:132.2px;top:359.73px;width:2.2px;height:0.7px"></div>
<div class="t" style="left:123.7px;top:356.58px;font-size:6.9px;color:#474a4d;width:10px;text-align:center;transform:rotate(-90deg)">9</div>
<div class="tick" style="left:132.2px;top:367.41px;width:2.2px;height:0.7px"></div>
<div class="tick" style="left:129.8px;top:375.09px;width:4.6px;height:0.7px"></div>
<div class="tick" style="left:132.2px;top:382.77px;width:2.2px;height:0.7px"></div>

<!-- slide -->
<div class="a" style="left:312.5px;top:83.5px;width:188.5px;height:298.5px;background:#fff;box-shadow:-0.6px 0 0 0 #dedede;overflow:hidden"><svg width="187.90" height="177.80" style="position:absolute;left:0.60px;top:0.00px;background:#cce8f2" viewBox="0 0 187.90 177.80"><path d="M-5.00 -57.76L192.90 -57.76M-60.20 -57.76L-74.26 -33.41M-60.20 -57.76L-46.14 -33.41M-46.14 -49.64L-60.20 -57.76M-46.14 -49.64L-32.08 -57.76M-46.14 -49.64L-46.14 -33.41M-60.20 -41.52L-60.20 -57.76M-60.20 -41.52L-74.26 -33.41M-60.20 -41.52L-46.14 -33.41M-32.08 -57.76L-46.14 -33.41M-32.08 -57.76L-18.02 -33.41M-18.02 -49.64L-32.08 -57.76M-18.02 -49.64L-3.96 -57.76M-18.02 -49.64L-18.02 -33.41M-32.08 -41.52L-32.08 -57.76M-32.08 -41.52L-46.14 -33.41M-32.08 -41.52L-18.02 -33.41M-3.96 -57.76L-18.02 -33.41M-3.96 -57.76L10.10 -33.41M10.10 -49.64L-3.96 -57.76M10.10 -49.64L24.16 -57.76M10.10 -49.64L10.10 -33.41M-3.96 -41.52L-3.96 -57.76M-3.96 -41.52L-18.02 -33.41M-3.96 -41.52L10.10 -33.41M24.16 -57.76L10.10 -33.41M24.16 -57.76L38.22 -33.41M38.22 -49.64L24.16 -57.76M38.22 -49.64L52.28 -57.76M38.22 -49.64L38.22 -33.41M24.16 -41.52L24.16 -57.76M24.16 -41.52L10.10 -33.41M24.16 -41.52L38.22 -33.41M52.28 -57.76L38.22 -33.41M52.28 -57.76L66.34 -33.41M66.34 -49.64L52.28 -57.76M66.34 -49.64L80.40 -57.76M66.34 -49.64L66.34 -33.41M52.28 -41.52L52.28 -57.76M52.28 -41.52L38.22 -33.41M52.28 -41.52L66.34 -33.41M80.40 -57.76L66.34 -33.41M80.40 -57.76L94.46 -33.41M94.46 -49.64L80.40 -57.76M94.46 -49.64L108.52 -57.76M94.46 -49.64L94.46 -33.41M80.40 -41.52L80.40 -57.76M80.40 -41.52L66.34 -33.41M80.40 -41.52L94.46 -33.41M108.52 -57.76L94.46 -33.41M108.52 -57.76L122.58 -33.41M122.58 -49.64L108.52 -57.76M122.58 -49.64L136.64 -57.76M122.58 -49.64L122.58 -33.41M108.52 -41.52L108.52 -57.76M108.52 -41.52L94.46 -33.41M108.52 -41.52L122.58 -33.41M136.64 -57.76L122.58 -33.41M136.64 -57.76L150.70 -33.41M150.70 -49.64L136.64 -57.76M150.70 -49.64L164.76 -57.76M150.70 -49.64L150.70 -33.41M136.64 -41.52L136.64 -57.76M136.64 -41.52L122.58 -33.41M136.64 -41.52L150.70 -33.41M164.76 -57.76L150.70 -33.41M164.76 -57.76L178.82 -33.41M178.82 -49.64L164.76 -57.76M178.82 -49.64L192.88 -57.76M178.82 -49.64L178.82 -33.41M164.76 -41.52L164.76 -57.76M164.76 -41.52L150.70 -33.41M164.76 -41.52L178.82 -33.41M192.88 -57.76L178.82 -33.41M192.88 -57.76L206.94 -33.41M206.94 -49.64L192.88 -57.76M206.94 -49.64L221.00 -57.76M206.94 -49.64L206.94 -33.41M192.88 -41.52L192.88 -57.76M192.88 -41.52L178.82 -33.41M192.88 -41.52L206.94 -33.41M221.00 -57.76L206.94 -33.41M221.00 -57.76L235.06 -33.41M235.06 -49.64L221.00 -57.76M235.06 -49.64L249.12 -57.76M235.06 -49.64L235.06 -33.41M221.00 -41.52L221.00 -57.76M221.00 -41.52L206.94 -33.41M221.00 -41.52L235.06 -33.41M249.12 -57.76L235.06 -33.41M249.12 -57.76L263.18 -33.41M263.18 -49.64L249.12 -57.76M263.18 -49.64L277.24 -57.76M263.18 -49.64L263.18 -33.41M249.12 -41.52L249.12 -57.76M249.12 -41.52L235.06 -33.41M249.12 -41.52L263.18 -33.41M277.24 -57.76L263.18 -33.41M277.24 -57.76L291.30 -33.41M291.30 -49.64L277.24 -57.76M291.30 -49.64L305.36 -57.76M291.30 -49.64L291.30 -33.41M277.24 -41.52L277.24 -57.76M277.24 -41.52L263.18 -33.41M277.24 -41.52L291.30 -33.41M-5.00 -33.41L192.90 -33.41M-74.26 -33.41L-88.32 -9.05M-74.26 -33.41L-60.20 -9.05M-60.20 -25.29L-74.26 -33.41M-60.20 -25.29L-46.14 -33.41M-60.20 -25.29L-60.20 -9.05M-74.26 -17.17L-74.26 -33.41M-74.26 -17.17L-88.32 -9.05M-74.26 -17.17L-60.20 -9.05M-46.14 -33.41L-60.20 -9.05M-46.14 -33.41L-32.08 -9.05M-32.08 -25.29L-46.14 -33.41M-32.08 -25.29L-18.02 -33.41M-32.08 -25.29L-32.08 -9.05M-46.14 -17.17L-46.14 -33.41M-46.14 -17.17L-60.20 -9.05M-46.14 -17.17L-32.08 -9.05M-18.02 -33.41L-32.08 -9.05M-18.02 -33.41L-3.96 -9.05M-3.96 -25.29L-18.02 -33.41M-3.96 -25.29L10.10 -33.41M-3.96 -25.29L-3.96 -9.05M-18.02 -17.17L-18.02 -33.41M-18.02 -17.17L-32.08 -9.05M-18.02 -17.17L-3.96 -9.05M10.10 -33.41L-3.96 -9.05M10.10 -33.41L24.16 -9.05M24.16 -25.29L10.10 -33.41M24.16 -25.29L38.22 -33.41M24.16 -25.29L24.16 -9.05M10.10 -17.17L10.10 -33.41M10.10 -17.17L-3.96 -9.05M10.10 -17.17L24.16 -9.05M38.22 -33.41L24.16 -9.05M38.22 -33.41L52.28 -9.05M52.28 -25.29L38.22 -33.41M52.28 -25.29L66.34 -33.41M52.28 -25.29L52.28 -9.05M38.22 -17.17L38.22 -33.41M38.22 -17.17L24.16 -9.05M38.22 -17.17L52.28 -9.05M66.34 -33.41L52.28 -9.05M66.34 -33.41L80.40 -9.05M80.40 -25.29L66.34 -33.41M80.40 -25.29L94.46 -33.41M80.40 -25.29L80.40 -9.05M66.34 -17.17L66.34 -33.41M66.34 -17.17L52.28 -9.05M66.34 -17.17L80.40 -9.05M94.46 -33.41L80.40 -9.05M94.46 -33.41L108.52 -9.05M108.52 -25.29L94.46 -33.41M108.52 -25.29L122.58 -33.41M108.52 -25.29L108.52 -9.05M94.46 -17.17L94.46 -33.41M94.46 -17.17L80.40 -9.05M94.46 -17.17L108.52 -9.05M122.58 -33.41L108.52 -9.05M122.58 -33.41L136.64 -9.05M136.64 -25.29L122.58 -33.41M136.64 -25.29L150.70 -33.41M136.64 -25.29L136.64 -9.05M122.58 -17.17L122.58 -33.41M122.58 -17.17L108.52 -9.05M122.58 -17.17L136.64 -9.05M150.70 -33.41L136.64 -9.05M150.70 -33.41L164.76 -9.05M164.76 -25.29L150.70 -33.41M164.76 -25.29L178.82 -33.41M164.76 -25.29L164.76 -9.05M150.70 -17.17L150.70 -33.41M150.70 -17.17L136.64 -9.05M150.70 -17.17L164.76 -9.05M178.82 -33.41L164.76 -9.05M178.82 -33.41L192.88 -9.05M192.88 -25.29L178.82 -33.41M192.88 -25.29L206.94 -33.41M192.88 -25.29L192.88 -9.05M178.82 -17.17L178.82 -33.41M178.82 -17.17L164.76 -9.05M178.82 -17.17L192.88 -9.05M206.94 -33.41L192.88 -9.05M206.94 -33.41L221.00 -9.05M221.00 -25.29L206.94 -33.41M221.00 -25.29L235.06 -33.41M221.00 -25.29L221.00 -9.05M206.94 -17.17L206.94 -33.41M206.94 -17.17L192.88 -9.05M206.94 -17.17L221.00 -9.05M235.06 -33.41L221.00 -9.05M235.06 -33.41L249.12 -9.05M249.12 -25.29L235.06 -33.41M249.12 -25.29L263.18 -33.41M249.12 -25.29L249.12 -9.05M235.06 -17.17L235.06 -33.41M235.06 -17.17L221.00 -9.05M235.06 -17.17L249.12 -9.05M263.18 -33.41L249.12 -9.05M263.18 -33.41L277.24 -9.05M277.24 -25.29L263.18 -33.41M277.24 -25.29L291.30 -33.41M277.24 -25.29L277.24 -9.05M263.18 -17.17L263.18 -33.41M263.18 -17.17L249.12 -9.05M263.18 -17.17L277.24 -9.05M-5.00 -9.05L192.90 -9.05M-60.20 -9.05L-74.26 15.30M-60.20 -9.05L-46.14 15.30M-46.14 -0.94L-60.20 -9.05M-46.14 -0.94L-32.08 -9.05M-46.14 -0.94L-46.14 15.30M-60.20 7.18L-60.20 -9.05M-60.20 7.18L-74.26 15.30M-60.20 7.18L-46.14 15.30M-32.08 -9.05L-46.14 15.30M-32.08 -9.05L-18.02 15.30M-18.02 -0.94L-32.08 -9.05M-18.02 -0.94L-3.96 -9.05M-18.02 -0.94L-18.02 15.30M-32.08 7.18L-32.08 -9.05M-32.08 7.18L-46.14 15.30M-32.08 7.18L-18.02 15.30M-3.96 -9.05L-18.02 15.30M-3.96 -9.05L10.10 15.30M10.10 -0.94L-3.96 -9.05M10.10 -0.94L24.16 -9.05M10.10 -0.94L10.10 15.30M-3.96 7.18L-3.96 -9.05M-3.96 7.18L-18.02 15.30M-3.96 7.18L10.10 15.30M24.16 -9.05L10.10 15.30M24.16 -9.05L38.22 15.30M38.22 -0.94L24.16 -9.05M38.22 -0.94L52.28 -9.05M38.22 -0.94L38.22 15.30M24.16 7.18L24.16 -9.05M24.16 7.18L10.10 15.30M24.16 7.18L38.22 15.30M52.28 -9.05L38.22 15.30M52.28 -9.05L66.34 15.30M66.34 -0.94L52.28 -9.05M66.34 -0.94L80.40 -9.05M66.34 -0.94L66.34 15.30M52.28 7.18L52.28 -9.05M52.28 7.18L38.22 15.30M52.28 7.18L66.34 15.30M80.40 -9.05L66.34 15.30M80.40 -9.05L94.46 15.30M94.46 -0.94L80.40 -9.05M94.46 -0.94L108.52 -9.05M94.46 -0.94L94.46 15.30M80.40 7.18L80.40 -9.05M80.40 7.18L66.34 15.30M80.40 7.18L94.46 15.30M108.52 -9.05L94.46 15.30M108.52 -9.05L122.58 15.30M122.58 -0.94L108.52 -9.05M122.58 -0.94L136.64 -9.05M122.58 -0.94L122.58 15.30M108.52 7.18L108.52 -9.05M108.52 7.18L94.46 15.30M108.52 7.18L122.58 15.30M136.64 -9.05L122.58 15.30M136.64 -9.05L150.70 15.30M150.70 -0.94L136.64 -9.05M150.70 -0.94L164.76 -9.05M150.70 -0.94L150.70 15.30M136.64 7.18L136.64 -9.05M136.64 7.18L122.58 15.30M136.64 7.18L150.70 15.30M164.76 -9.05L150.70 15.30M164.76 -9.05L178.82 15.30M178.82 -0.94L164.76 -9.05M178.82 -0.94L192.88 -9.05M178.82 -0.94L178.82 15.30M164.76 7.18L164.76 -9.05M164.76 7.18L150.70 15.30M164.76 7.18L178.82 15.30M192.88 -9.05L178.82 15.30M192.88 -9.05L206.94 15.30M206.94 -0.94L192.88 -9.05M206.94 -0.94L221.00 -9.05M206.94 -0.94L206.94 15.30M192.88 7.18L192.88 -9.05M192.88 7.18L178.82 15.30M192.88 7.18L206.94 15.30M221.00 -9.05L206.94 15.30M221.00 -9.05L235.06 15.30M235.06 -0.94L221.00 -9.05M235.06 -0.94L249.12 -9.05M235.06 -0.94L235.06 15.30M221.00 7.18L221.00 -9.05M221.00 7.18L206.94 15.30M221.00 7.18L235.06 15.30M249.12 -9.05L235.06 15.30M249.12 -9.05L263.18 15.30M263.18 -0.94L249.12 -9.05M263.18 -0.94L277.24 -9.05M263.18 -0.94L263.18 15.30M249.12 7.18L249.12 -9.05M249.12 7.18L235.06 15.30M249.12 7.18L263.18 15.30M277.24 -9.05L263.18 15.30M277.24 -9.05L291.30 15.30M291.30 -0.94L277.24 -9.05M291.30 -0.94L305.36 -9.05M291.30 -0.94L291.30 15.30M277.24 7.18L277.24 -9.05M277.24 7.18L263.18 15.30M277.24 7.18L291.30 15.30M-5.00 15.30L192.90 15.30M-74.26 15.30L-88.32 39.65M-74.26 15.30L-60.20 39.65M-60.20 23.42L-74.26 15.30M-60.20 23.42L-46.14 15.30M-60.20 23.42L-60.20 39.65M-74.26 31.54L-74.26 15.30M-74.26 31.54L-88.32 39.65M-74.26 31.54L-60.20 39.65M-46.14 15.30L-60.20 39.65M-46.14 15.30L-32.08 39.65M-32.08 23.42L-46.14 15.30M-32.08 23.42L-18.02 15.30M-32.08 23.42L-32.08 39.65M-46.14 31.54L-46.14 15.30M-46.14 31.54L-60.20 39.65M-46.14 31.54L-32.08 39.65M-18.02 15.30L-32.08 39.65M-18.02 15.30L-3.96 39.65M-3.96 23.42L-18.02 15.30M-3.96 23.42L10.10 15.30M-3.96 23.42L-3.96 39.65M-18.02 31.54L-18.02 15.30M-18.02 31.54L-32.08 39.65M-18.02 31.54L-3.96 39.65M10.10 15.30L-3.96 39.65M10.10 15.30L24.16 39.65M24.16 23.42L10.10 15.30M24.16 23.42L38.22 15.30M24.16 23.42L24.16 39.65M10.10 31.54L10.10 15.30M10.10 31.54L-3.96 39.65M10.10 31.54L24.16 39.65M38.22 15.30L24.16 39.65M38.22 15.30L52.28 39.65M52.28 23.42L38.22 15.30M52.28 23.42L66.34 15.30M52.28 23.42L52.28 39.65M38.22 31.54L38.22 15.30M38.22 31.54L24.16 39.65M38.22 31.54L52.28 39.65M66.34 15.30L52.28 39.65M66.34 15.30L80.40 39.65M80.40 23.42L66.34 15.30M80.40 23.42L94.46 15.30M80.40 23.42L80.40 39.65M66.34 31.54L66.34 15.30M66.34 31.54L52.28 39.65M66.34 31.54L80.40 39.65M94.46 15.30L80.40 39.65M94.46 15.30L108.52 39.65M108.52 23.42L94.46 15.30M108.52 23.42L122.58 15.30M108.52 23.42L108.52 39.65M94.46 31.54L94.46 15.30M94.46 31.54L80.40 39.65M94.46 31.54L108.52 39.65M122.58 15.30L108.52 39.65M122.58 15.30L136.64 39.65M136.64 23.42L122.58 15.30M136.64 23.42L150.70 15.30M136.64 23.42L136.64 39.65M122.58 31.54L122.58 15.30M122.58 31.54L108.52 39.65M122.58 31.54L136.64 39.65M150.70 15.30L136.64 39.65M150.70 15.30L164.76 39.65M164.76 23.42L150.70 15.30M164.76 23.42L178.82 15.30M164.76 23.42L164.76 39.65M150.70 31.54L150.70 15.30M150.70 31.54L136.64 39.65M150.70 31.54L164.76 39.65M178.82 15.30L164.76 39.65M178.82 15.30L192.88 39.65M192.88 23.42L178.82 15.30M192.88 23.42L206.94 15.30M192.88 23.42L192.88 39.65M178.82 31.54L178.82 15.30M178.82 31.54L164.76 39.65M178.82 31.54L192.88 39.65M206.94 15.30L192.88 39.65M206.94 15.30L221.00 39.65M221.00 23.42L206.94 15.30M221.00 23.42L235.06 15.30M221.00 23.42L221.00 39.65M206.94 31.54L206.94 15.30M206.94 31.54L192.88 39.65M206.94 31.54L221.00 39.65M235.06 15.30L221.00 39.65M235.06 15.30L249.12 39.65M249.12 23.42L235.06 15.30M249.12 23.42L263.18 15.30M249.12 23.42L249.12 39.65M235.06 31.54L235.06 15.30M235.06 31.54L221.00 39.65M235.06 31.54L249.12 39.65M263.18 15.30L249.12 39.65M263.18 15.30L277.24 39.65M277.24 23.42L263.18 15.30M277.24 23.42L291.30 15.30M277.24 23.42L277.24 39.65M263.18 31.54L263.18 15.30M263.18 31.54L249.12 39.65M263.18 31.54L277.24 39.65M-5.00 39.65L192.90 39.65M-60.20 39.65L-74.26 64.01M-60.20 39.65L-46.14 64.01M-46.14 47.77L-60.20 39.65M-46.14 47.77L-32.08 39.65M-46.14 47.77L-46.14 64.01M-60.20 55.89L-60.20 39.65M-60.20 55.89L-74.26 64.01M-60.20 55.89L-46.14 64.01M-32.08 39.65L-46.14 64.01M-32.08 39.65L-18.02 64.01M-18.02 47.77L-32.08 39.65M-18.02 47.77L-3.96 39.65M-18.02 47.77L-18.02 64.01M-32.08 55.89L-32.08 39.65M-32.08 55.89L-46.14 64.01M-32.08 55.89L-18.02 64.01M-3.96 39.65L-18.02 64.01M-3.96 39.65L10.10 64.01M10.10 47.77L-3.96 39.65M10.10 47.77L24.16 39.65M10.10 47.77L10.10 64.01M-3.96 55.89L-3.96 39.65M-3.96 55.89L-18.02 64.01M-3.96 55.89L10.10 64.01M24.16 39.65L10.10 64.01M24.16 39.65L38.22 64.01M38.22 47.77L24.16 39.65M38.22 47.77L52.28 39.65M38.22 47.77L38.22 64.01M24.16 55.89L24.16 39.65M24.16 55.89L10.10 64.01M24.16 55.89L38.22 64.01M52.28 39.65L38.22 64.01M52.28 39.65L66.34 64.01M66.34 47.77L52.28 39.65M66.34 47.77L80.40 39.65M66.34 47.77L66.34 64.01M52.28 55.89L52.28 39.65M52.28 55.89L38.22 64.01M52.28 55.89L66.34 64.01M80.40 39.65L66.34 64.01M80.40 39.65L94.46 64.01M94.46 47.77L80.40 39.65M94.46 47.77L108.52 39.65M94.46 47.77L94.46 64.01M80.40 55.89L80.40 39.65M80.40 55.89L66.34 64.01M80.40 55.89L94.46 64.01M108.52 39.65L94.46 64.01M108.52 39.65L122.58 64.01M122.58 47.77L108.52 39.65M122.58 47.77L136.64 39.65M122.58 47.77L122.58 64.01M108.52 55.89L108.52 39.65M108.52 55.89L94.46 64.01M108.52 55.89L122.58 64.01M136.64 39.65L122.58 64.01M136.64 39.65L150.70 64.01M150.70 47.77L136.64 39.65M150.70 47.77L164.76 39.65M150.70 47.77L150.70 64.01M136.64 55.89L136.64 39.65M136.64 55.89L122.58 64.01M136.64 55.89L150.70 64.01M164.76 39.65L150.70 64.01M164.76 39.65L178.82 64.01M178.82 47.77L164.76 39.65M178.82 47.77L192.88 39.65M178.82 47.77L178.82 64.01M164.76 55.89L164.76 39.65M164.76 55.89L150.70 64.01M164.76 55.89L178.82 64.01M192.88 39.65L178.82 64.01M192.88 39.65L206.94 64.01M206.94 47.77L192.88 39.65M206.94 47.77L221.00 39.65M206.94 47.77L206.94 64.01M192.88 55.89L192.88 39.65M192.88 55.89L178.82 64.01M192.88 55.89L206.94 64.01M221.00 39.65L206.94 64.01M221.00 39.65L235.06 64.01M235.06 47.77L221.00 39.65M235.06 47.77L249.12 39.65M235.06 47.77L235.06 64.01M221.00 55.89L221.00 39.65M221.00 55.89L206.94 64.01M221.00 55.89L235.06 64.01M249.12 39.65L235.06 64.01M249.12 39.65L263.18 64.01M263.18 47.77L249.12 39.65M263.18 47.77L277.24 39.65M263.18 47.77L263.18 64.01M249.12 55.89L249.12 39.65M249.12 55.89L235.06 64.01M249.12 55.89L263.18 64.01M277.24 39.65L263.18 64.01M277.24 39.65L291.30 64.01M291.30 47.77L277.24 39.65M291.30 47.77L305.36 39.65M291.30 47.77L291.30 64.01M277.24 55.89L277.24 39.65M277.24 55.89L263.18 64.01M277.24 55.89L291.30 64.01M-5.00 64.01L192.90 64.01M-74.26 64.01L-88.32 88.36M-74.26 64.01L-60.20 88.36M-60.20 72.12L-74.26 64.01M-60.20 72.12L-46.14 64.01M-60.20 72.12L-60.20 88.36M-74.26 80.24L-74.26 64.01M-74.26 80.24L-88.32 88.36M-74.26 80.24L-60.20 88.36M-46.14 64.01L-60.20 88.36M-46.14 64.01L-32.08 88.36M-32.08 72.12L-46.14 64.01M-32.08 72.12L-18.02 64.01M-32.08 72.12L-32.08 88.36M-46.14 80.24L-46.14 64.01M-46.14 80.24L-60.20 88.36M-46.14 80.24L-32.08 88.36M-18.02 64.01L-32.08 88.36M-18.02 64.01L-3.96 88.36M-3.96 72.12L-18.02 64.01M-3.96 72.12L10.10 64.01M-3.96 72.12L-3.96 88.36M-18.02 80.24L-18.02 64.01M-18.02 80.24L-32.08 88.36M-18.02 80.24L-3.96 88.36M10.10 64.01L-3.96 88.36M10.10 64.01L24.16 88.36M24.16 72.12L10.10 64.01M24.16 72.12L38.22 64.01M24.16 72.12L24.16 88.36M10.10 80.24L10.10 64.01M10.10 80.24L-3.96 88.36M10.10 80.24L24.16 88.36M38.22 64.01L24.16 88.36M38.22 64.01L52.28 88.36M52.28 72.12L38.22 64.01M52.28 72.12L66.34 64.01M52.28 72.12L52.28 88.36M38.22 80.24L38.22 64.01M38.22 80.24L24.16 88.36M38.22 80.24L52.28 88.36M66.34 64.01L52.28 88.36M66.34 64.01L80.40 88.36M80.40 72.12L66.34 64.01M80.40 72.12L94.46 64.01M80.40 72.12L80.40 88.36M66.34 80.24L66.34 64.01M66.34 80.24L52.28 88.36M66.34 80.24L80.40 88.36M94.46 64.01L80.40 88.36M94.46 64.01L108.52 88.36M108.52 72.12L94.46 64.01M108.52 72.12L122.58 64.01M108.52 72.12L108.52 88.36M94.46 80.24L94.46 64.01M94.46 80.24L80.40 88.36M94.46 80.24L108.52 88.36M122.58 64.01L108.52 88.36M122.58 64.01L136.64 88.36M136.64 72.12L122.58 64.01M136.64 72.12L150.70 64.01M136.64 72.12L136.64 88.36M122.58 80.24L122.58 64.01M122.58 80.24L108.52 88.36M122.58 80.24L136.64 88.36M150.70 64.01L136.64 88.36M150.70 64.01L164.76 88.36M164.76 72.12L150.70 64.01M164.76 72.12L178.82 64.01M164.76 72.12L164.76 88.36M150.70 80.24L150.70 64.01M150.70 80.24L136.64 88.36M150.70 80.24L164.76 88.36M178.82 64.01L164.76 88.36M178.82 64.01L192.88 88.36M192.88 72.12L178.82 64.01M192.88 72.12L206.94 64.01M192.88 72.12L192.88 88.36M178.82 80.24L178.82 64.01M178.82 80.24L164.76 88.36M178.82 80.24L192.88 88.36M206.94 64.01L192.88 88.36M206.94 64.01L221.00 88.36M221.00 72.12L206.94 64.01M221.00 72.12L235.06 64.01M221.00 72.12L221.00 88.36M206.94 80.24L206.94 64.01M206.94 80.24L192.88 88.36M206.94 80.24L221.00 88.36M235.06 64.01L221.00 88.36M235.06 64.01L249.12 88.36M249.12 72.12L235.06 64.01M249.12 72.12L263.18 64.01M249.12 72.12L249.12 88.36M235.06 80.24L235.06 64.01M235.06 80.24L221.00 88.36M235.06 80.24L249.12 88.36M263.18 64.01L249.12 88.36M263.18 64.01L277.24 88.36M277.24 72.12L263.18 64.01M277.24 72.12L291.30 64.01M277.24 72.12L277.24 88.36M263.18 80.24L263.18 64.01M263.18 80.24L249.12 88.36M263.18 80.24L277.24 88.36M-5.00 88.36L192.90 88.36M-60.20 88.36L-74.26 112.71M-60.20 88.36L-46.14 112.71M-46.14 96.48L-60.20 88.36M-46.14 96.48L-32.08 88.36M-46.14 96.48L-46.14 112.71M-60.20 104.59L-60.20 88.36M-60.20 104.59L-74.26 112.71M-60.20 104.59L-46.14 112.71M-32.08 88.36L-46.14 112.71M-32.08 88.36L-18.02 112.71M-18.02 96.48L-32.08 88.36M-18.02 96.48L-3.96 88.36M-18.02 96.48L-18.02 112.71M-32.08 104.59L-32.08 88.36M-32.08 104.59L-46.14 112.71M-32.08 104.59L-18.02 112.71M-3.96 88.36L-18.02 112.71M-3.96 88.36L10.10 112.71M10.10 96.48L-3.96 88.36M10.10 96.48L24.16 88.36M10.10 96.48L10.10 112.71M-3.96 104.59L-3.96 88.36M-3.96 104.59L-18.02 112.71M-3.96 104.59L10.10 112.71M24.16 88.36L10.10 112.71M24.16 88.36L38.22 112.71M38.22 96.48L24.16 88.36M38.22 96.48L52.28 88.36M38.22 96.48L38.22 112.71M24.16 104.59L24.16 88.36M24.16 104.59L10.10 112.71M24.16 104.59L38.22 112.71M52.28 88.36L38.22 112.71M52.28 88.36L66.34 112.71M66.34 96.48L52.28 88.36M66.34 96.48L80.40 88.36M66.34 96.48L66.34 112.71M52.28 104.59L52.28 88.36M52.28 104.59L38.22 112.71M52.28 104.59L66.34 112.71M80.40 88.36L66.34 112.71M80.40 88.36L94.46 112.71M94.46 96.48L80.40 88.36M94.46 96.48L108.52 88.36M94.46 96.48L94.46 112.71M80.40 104.59L80.40 88.36M80.40 104.59L66.34 112.71M80.40 104.59L94.46 112.71M108.52 88.36L94.46 112.71M108.52 88.36L122.58 112.71M122.58 96.48L108.52 88.36M122.58 96.48L136.64 88.36M122.58 96.48L122.58 112.71M108.52 104.59L108.52 88.36M108.52 104.59L94.46 112.71M108.52 104.59L122.58 112.71M136.64 88.36L122.58 112.71M136.64 88.36L150.70 112.71M150.70 96.48L136.64 88.36M150.70 96.48L164.76 88.36M150.70 96.48L150.70 112.71M136.64 104.59L136.64 88.36M136.64 104.59L122.58 112.71M136.64 104.59L150.70 112.71M164.76 88.36L150.70 112.71M164.76 88.36L178.82 112.71M178.82 96.48L164.76 88.36M178.82 96.48L192.88 88.36M178.82 96.48L178.82 112.71M164.76 104.59L164.76 88.36M164.76 104.59L150.70 112.71M164.76 104.59L178.82 112.71M192.88 88.36L178.82 112.71M192.88 88.36L206.94 112.71M206.94 96.48L192.88 88.36M206.94 96.48L221.00 88.36M206.94 96.48L206.94 112.71M192.88 104.59L192.88 88.36M192.88 104.59L178.82 112.71M192.88 104.59L206.94 112.71M221.00 88.36L206.94 112.71M221.00 88.36L235.06 112.71M235.06 96.48L221.00 88.36M235.06 96.48L249.12 88.36M235.06 96.48L235.06 112.71M221.00 104.59L221.00 88.36M221.00 104.59L206.94 112.71M221.00 104.59L235.06 112.71M249.12 88.36L235.06 112.71M249.12 88.36L263.18 112.71M263.18 96.48L249.12 88.36M263.18 96.48L277.24 88.36M263.18 96.48L263.18 112.71M249.12 104.59L249.12 88.36M249.12 104.59L235.06 112.71M249.12 104.59L263.18 112.71M277.24 88.36L263.18 112.71M277.24 88.36L291.30 112.71M291.30 96.48L277.24 88.36M291.30 96.48L305.36 88.36M291.30 96.48L291.30 112.71M277.24 104.59L277.24 88.36M277.24 104.59L263.18 112.71M277.24 104.59L291.30 112.71M-5.00 112.71L192.90 112.71M-74.26 112.71L-88.32 137.06M-74.26 112.71L-60.20 137.06M-60.20 120.83L-74.26 112.71M-60.20 120.83L-46.14 112.71M-60.20 120.83L-60.20 137.06M-74.26 128.95L-74.26 112.71M-74.26 128.95L-88.32 137.06M-74.26 128.95L-60.20 137.06M-46.14 112.71L-60.20 137.06M-46.14 112.71L-32.08 137.06M-32.08 120.83L-46.14 112.71M-32.08 120.83L-18.02 112.71M-32.08 120.83L-32.08 137.06M-46.14 128.95L-46.14 112.71M-46.14 128.95L-60.20 137.06M-46.14 128.95L-32.08 137.06M-18.02 112.71L-32.08 137.06M-18.02 112.71L-3.96 137.06M-3.96 120.83L-18.02 112.71M-3.96 120.83L10.10 112.71M-3.96 120.83L-3.96 137.06M-18.02 128.95L-18.02 112.71M-18.02 128.95L-32.08 137.06M-18.02 128.95L-3.96 137.06M10.10 112.71L-3.96 137.06M10.10 112.71L24.16 137.06M24.16 120.83L10.10 112.71M24.16 120.83L38.22 112.71M24.16 120.83L24.16 137.06M10.10 128.95L10.10 112.71M10.10 128.95L-3.96 137.06M10.10 128.95L24.16 137.06M38.22 112.71L24.16 137.06M38.22 112.71L52.28 137.06M52.28 120.83L38.22 112.71M52.28 120.83L66.34 112.71M52.28 120.83L52.28 137.06M38.22 128.95L38.22 112.71M38.22 128.95L24.16 137.06M38.22 128.95L52.28 137.06M66.34 112.71L52.28 137.06M66.34 112.71L80.40 137.06M80.40 120.83L66.34 112.71M80.40 120.83L94.46 112.71M80.40 120.83L80.40 137.06M66.34 128.95L66.34 112.71M66.34 128.95L52.28 137.06M66.34 128.95L80.40 137.06M94.46 112.71L80.40 137.06M94.46 112.71L108.52 137.06M108.52 120.83L94.46 112.71M108.52 120.83L122.58 112.71M108.52 120.83L108.52 137.06M94.46 128.95L94.46 112.71M94.46 128.95L80.40 137.06M94.46 128.95L108.52 137.06M122.58 112.71L108.52 137.06M122.58 112.71L136.64 137.06M136.64 120.83L122.58 112.71M136.64 120.83L150.70 112.71M136.64 120.83L136.64 137.06M122.58 128.95L122.58 112.71M122.58 128.95L108.52 137.06M122.58 128.95L136.64 137.06M150.70 112.71L136.64 137.06M150.70 112.71L164.76 137.06M164.76 120.83L150.70 112.71M164.76 120.83L178.82 112.71M164.76 120.83L164.76 137.06M150.70 128.95L150.70 112.71M150.70 128.95L136.64 137.06M150.70 128.95L164.76 137.06M178.82 112.71L164.76 137.06M178.82 112.71L192.88 137.06M192.88 120.83L178.82 112.71M192.88 120.83L206.94 112.71M192.88 120.83L192.88 137.06M178.82 128.95L178.82 112.71M178.82 128.95L164.76 137.06M178.82 128.95L192.88 137.06M206.94 112.71L192.88 137.06M206.94 112.71L221.00 137.06M221.00 120.83L206.94 112.71M221.00 120.83L235.06 112.71M221.00 120.83L221.00 137.06M206.94 128.95L206.94 112.71M206.94 128.95L192.88 137.06M206.94 128.95L221.00 137.06M235.06 112.71L221.00 137.06M235.06 112.71L249.12 137.06M249.12 120.83L235.06 112.71M249.12 120.83L263.18 112.71M249.12 120.83L249.12 137.06M235.06 128.95L235.06 112.71M235.06 128.95L221.00 137.06M235.06 128.95L249.12 137.06M263.18 112.71L249.12 137.06M263.18 112.71L277.24 137.06M277.24 120.83L263.18 112.71M277.24 120.83L291.30 112.71M277.24 120.83L277.24 137.06M263.18 128.95L263.18 112.71M263.18 128.95L249.12 137.06M263.18 128.95L277.24 137.06M-5.00 137.06L192.90 137.06M-60.20 137.06L-74.26 161.42M-60.20 137.06L-46.14 161.42M-46.14 145.18L-60.20 137.06M-46.14 145.18L-32.08 137.06M-46.14 145.18L-46.14 161.42M-60.20 153.30L-60.20 137.06M-60.20 153.30L-74.26 161.42M-60.20 153.30L-46.14 161.42M-32.08 137.06L-46.14 161.42M-32.08 137.06L-18.02 161.42M-18.02 145.18L-32.08 137.06M-18.02 145.18L-3.96 137.06M-18.02 145.18L-18.02 161.42M-32.08 153.30L-32.08 137.06M-32.08 153.30L-46.14 161.42M-32.08 153.30L-18.02 161.42M-3.96 137.06L-18.02 161.42M-3.96 137.06L10.10 161.42M10.10 145.18L-3.96 137.06M10.10 145.18L24.16 137.06M10.10 145.18L10.10 161.42M-3.96 153.30L-3.96 137.06M-3.96 153.30L-18.02 161.42M-3.96 153.30L10.10 161.42M24.16 137.06L10.10 161.42M24.16 137.06L38.22 161.42M38.22 145.18L24.16 137.06M38.22 145.18L52.28 137.06M38.22 145.18L38.22 161.42M24.16 153.30L24.16 137.06M24.16 153.30L10.10 161.42M24.16 153.30L38.22 161.42M52.28 137.06L38.22 161.42M52.28 137.06L66.34 161.42M66.34 145.18L52.28 137.06M66.34 145.18L80.40 137.06M66.34 145.18L66.34 161.42M52.28 153.30L52.28 137.06M52.28 153.30L38.22 161.42M52.28 153.30L66.34 161.42M80.40 137.06L66.34 161.42M80.40 137.06L94.46 161.42M94.46 145.18L80.40 137.06M94.46 145.18L108.52 137.06M94.46 145.18L94.46 161.42M80.40 153.30L80.40 137.06M80.40 153.30L66.34 161.42M80.40 153.30L94.46 161.42M108.52 137.06L94.46 161.42M108.52 137.06L122.58 161.42M122.58 145.18L108.52 137.06M122.58 145.18L136.64 137.06M122.58 145.18L122.58 161.42M108.52 153.30L108.52 137.06M108.52 153.30L94.46 161.42M108.52 153.30L122.58 161.42M136.64 137.06L122.58 161.42M136.64 137.06L150.70 161.42M150.70 145.18L136.64 137.06M150.70 145.18L164.76 137.06M150.70 145.18L150.70 161.42M136.64 153.30L136.64 137.06M136.64 153.30L122.58 161.42M136.64 153.30L150.70 161.42M164.76 137.06L150.70 161.42M164.76 137.06L178.82 161.42M178.82 145.18L164.76 137.06M178.82 145.18L192.88 137.06M178.82 145.18L178.82 161.42M164.76 153.30L164.76 137.06M164.76 153.30L150.70 161.42M164.76 153.30L178.82 161.42M192.88 137.06L178.82 161.42M192.88 137.06L206.94 161.42M206.94 145.18L192.88 137.06M206.94 145.18L221.00 137.06M206.94 145.18L206.94 161.42M192.88 153.30L192.88 137.06M192.88 153.30L178.82 161.42M192.88 153.30L206.94 161.42M221.00 137.06L206.94 161.42M221.00 137.06L235.06 161.42M235.06 145.18L221.00 137.06M235.06 145.18L249.12 137.06M235.06 145.18L235.06 161.42M221.00 153.30L221.00 137.06M221.00 153.30L206.94 161.42M221.00 153.30L235.06 161.42M249.12 137.06L235.06 161.42M249.12 137.06L263.18 161.42M263.18 145.18L249.12 137.06M263.18 145.18L277.24 137.06M263.18 145.18L263.18 161.42M249.12 153.30L249.12 137.06M249.12 153.30L235.06 161.42M249.12 153.30L263.18 161.42M277.24 137.06L263.18 161.42M277.24 137.06L291.30 161.42M291.30 145.18L277.24 137.06M291.30 145.18L305.36 137.06M291.30 145.18L291.30 161.42M277.24 153.30L277.24 137.06M277.24 153.30L263.18 161.42M277.24 153.30L291.30 161.42M-5.00 161.42L192.90 161.42M-74.26 161.42L-88.32 185.77M-74.26 161.42L-60.20 185.77M-60.20 169.53L-74.26 161.42M-60.20 169.53L-46.14 161.42M-60.20 169.53L-60.20 185.77M-74.26 177.65L-74.26 161.42M-74.26 177.65L-88.32 185.77M-74.26 177.65L-60.20 185.77M-46.14 161.42L-60.20 185.77M-46.14 161.42L-32.08 185.77M-32.08 169.53L-46.14 161.42M-32.08 169.53L-18.02 161.42M-32.08 169.53L-32.08 185.77M-46.14 177.65L-46.14 161.42M-46.14 177.65L-60.20 185.77M-46.14 177.65L-32.08 185.77M-18.02 161.42L-32.08 185.77M-18.02 161.42L-3.96 185.77M-3.96 169.53L-18.02 161.42M-3.96 169.53L10.10 161.42M-3.96 169.53L-3.96 185.77M-18.02 177.65L-18.02 161.42M-18.02 177.65L-32.08 185.77M-18.02 177.65L-3.96 185.77M10.10 161.42L-3.96 185.77M10.10 161.42L24.16 185.77M24.16 169.53L10.10 161.42M24.16 169.53L38.22 161.42M24.16 169.53L24.16 185.77M10.10 177.65L10.10 161.42M10.10 177.65L-3.96 185.77M10.10 177.65L24.16 185.77M38.22 161.42L24.16 185.77M38.22 161.42L52.28 185.77M52.28 169.53L38.22 161.42M52.28 169.53L66.34 161.42M52.28 169.53L52.28 185.77M38.22 177.65L38.22 161.42M38.22 177.65L24.16 185.77M38.22 177.65L52.28 185.77M66.34 161.42L52.28 185.77M66.34 161.42L80.40 185.77M80.40 169.53L66.34 161.42M80.40 169.53L94.46 161.42M80.40 169.53L80.40 185.77M66.34 177.65L66.34 161.42M66.34 177.65L52.28 185.77M66.34 177.65L80.40 185.77M94.46 161.42L80.40 185.77M94.46 161.42L108.52 185.77M108.52 169.53L94.46 161.42M108.52 169.53L122.58 161.42M108.52 169.53L108.52 185.77M94.46 177.65L94.46 161.42M94.46 177.65L80.40 185.77M94.46 177.65L108.52 185.77M122.58 161.42L108.52 185.77M122.58 161.42L136.64 185.77M136.64 169.53L122.58 161.42M136.64 169.53L150.70 161.42M136.64 169.53L136.64 185.77M122.58 177.65L122.58 161.42M122.58 177.65L108.52 185.77M122.58 177.65L136.64 185.77M150.70 161.42L136.64 185.77M150.70 161.42L164.76 185.77M164.76 169.53L150.70 161.42M164.76 169.53L178.82 161.42M164.76 169.53L164.76 185.77M150.70 177.65L150.70 161.42M150.70 177.65L136.64 185.77M150.70 177.65L164.76 185.77M178.82 161.42L164.76 185.77M178.82 161.42L192.88 185.77M192.88 169.53L178.82 161.42M192.88 169.53L206.94 161.42M192.88 169.53L192.88 185.77M178.82 177.65L178.82 161.42M178.82 177.65L164.76 185.77M178.82 177.65L192.88 185.77M206.94 161.42L192.88 185.77M206.94 161.42L221.00 185.77M221.00 169.53L206.94 161.42M221.00 169.53L235.06 161.42M221.00 169.53L221.00 185.77M206.94 177.65L206.94 161.42M206.94 177.65L192.88 185.77M206.94 177.65L221.00 185.77M235.06 161.42L221.00 185.77M235.06 161.42L249.12 185.77M249.12 169.53L235.06 161.42M249.12 169.53L263.18 161.42M249.12 169.53L249.12 185.77M235.06 177.65L235.06 161.42M235.06 177.65L221.00 185.77M235.06 177.65L249.12 185.77M263.18 161.42L249.12 185.77M263.18 161.42L277.24 185.77M277.24 169.53L263.18 161.42M277.24 169.53L291.30 161.42M277.24 169.53L277.24 185.77M263.18 177.65L263.18 161.42M263.18 177.65L249.12 185.77M263.18 177.65L277.24 185.77M-5.00 185.77L192.90 185.77M-60.20 185.77L-74.26 210.12M-60.20 185.77L-46.14 210.12M-46.14 193.89L-60.20 185.77M-46.14 193.89L-32.08 185.77M-46.14 193.89L-46.14 210.12M-60.20 202.00L-60.20 185.77M-60.20 202.00L-74.26 210.12M-60.20 202.00L-46.14 210.12M-32.08 185.77L-46.14 210.12M-32.08 185.77L-18.02 210.12M-18.02 193.89L-32.08 185.77M-18.02 193.89L-3.96 185.77M-18.02 193.89L-18.02 210.12M-32.08 202.00L-32.08 185.77M-32.08 202.00L-46.14 210.12M-32.08 202.00L-18.02 210.12M-3.96 185.77L-18.02 210.12M-3.96 185.77L10.10 210.12M10.10 193.89L-3.96 185.77M10.10 193.89L24.16 185.77M10.10 193.89L10.10 210.12M-3.96 202.00L-3.96 185.77M-3.96 202.00L-18.02 210.12M-3.96 202.00L10.10 210.12M24.16 185.77L10.10 210.12M24.16 185.77L38.22 210.12M38.22 193.89L24.16 185.77M38.22 193.89L52.28 185.77M38.22 193.89L38.22 210.12M24.16 202.00L24.16 185.77M24.16 202.00L10.10 210.12M24.16 202.00L38.22 210.12M52.28 185.77L38.22 210.12M52.28 185.77L66.34 210.12M66.34 193.89L52.28 185.77M66.34 193.89L80.40 185.77M66.34 193.89L66.34 210.12M52.28 202.00L52.28 185.77M52.28 202.00L38.22 210.12M52.28 202.00L66.34 210.12M80.40 185.77L66.34 210.12M80.40 185.77L94.46 210.12M94.46 193.89L80.40 185.77M94.46 193.89L108.52 185.77M94.46 193.89L94.46 210.12M80.40 202.00L80.40 185.77M80.40 202.00L66.34 210.12M80.40 202.00L94.46 210.12M108.52 185.77L94.46 210.12M108.52 185.77L122.58 210.12M122.58 193.89L108.52 185.77M122.58 193.89L136.64 185.77M122.58 193.89L122.58 210.12M108.52 202.00L108.52 185.77M108.52 202.00L94.46 210.12M108.52 202.00L122.58 210.12M136.64 185.77L122.58 210.12M136.64 185.77L150.70 210.12M150.70 193.89L136.64 185.77M150.70 193.89L164.76 185.77M150.70 193.89L150.70 210.12M136.64 202.00L136.64 185.77M136.64 202.00L122.58 210.12M136.64 202.00L150.70 210.12M164.76 185.77L150.70 210.12M164.76 185.77L178.82 210.12M178.82 193.89L164.76 185.77M178.82 193.89L192.88 185.77M178.82 193.89L178.82 210.12M164.76 202.00L164.76 185.77M164.76 202.00L150.70 210.12M164.76 202.00L178.82 210.12M192.88 185.77L178.82 210.12M192.88 185.77L206.94 210.12M206.94 193.89L192.88 185.77M206.94 193.89L221.00 185.77M206.94 193.89L206.94 210.12M192.88 202.00L192.88 185.77M192.88 202.00L178.82 210.12M192.88 202.00L206.94 210.12M221.00 185.77L206.94 210.12M221.00 185.77L235.06 210.12M235.06 193.89L221.00 185.77M235.06 193.89L249.12 185.77M235.06 193.89L235.06 210.12M221.00 202.00L221.00 185.77M221.00 202.00L206.94 210.12M221.00 202.00L235.06 210.12M249.12 185.77L235.06 210.12M249.12 185.77L263.18 210.12M263.18 193.89L249.12 185.77M263.18 193.89L277.24 185.77M263.18 193.89L263.18 210.12M249.12 202.00L249.12 185.77M249.12 202.00L235.06 210.12M249.12 202.00L263.18 210.12M277.24 185.77L263.18 210.12M277.24 185.77L291.30 210.12M291.30 193.89L277.24 185.77M291.30 193.89L305.36 185.77M291.30 193.89L291.30 210.12M277.24 202.00L277.24 185.77M277.24 202.00L263.18 210.12M277.24 202.00L291.30 210.12M-5.00 210.12L192.90 210.12M-74.26 210.12L-88.32 234.47M-74.26 210.12L-60.20 234.47M-60.20 218.24L-74.26 210.12M-60.20 218.24L-46.14 210.12M-60.20 218.24L-60.20 234.47M-74.26 226.36L-74.26 210.12M-74.26 226.36L-88.32 234.47M-74.26 226.36L-60.20 234.47M-46.14 210.12L-60.20 234.47M-46.14 210.12L-32.08 234.47M-32.08 218.24L-46.14 210.12M-32.08 218.24L-18.02 210.12M-32.08 218.24L-32.08 234.47M-46.14 226.36L-46.14 210.12M-46.14 226.36L-60.20 234.47M-46.14 226.36L-32.08 234.47M-18.02 210.12L-32.08 234.47M-18.02 210.12L-3.96 234.47M-3.96 218.24L-18.02 210.12M-3.96 218.24L10.10 210.12M-3.96 218.24L-3.96 234.47M-18.02 226.36L-18.02 210.12M-18.02 226.36L-32.08 234.47M-18.02 226.36L-3.96 234.47M10.10 210.12L-3.96 234.47M10.10 210.12L24.16 234.47M24.16 218.24L10.10 210.12M24.16 218.24L38.22 210.12M24.16 218.24L24.16 234.47M10.10 226.36L10.10 210.12M10.10 226.36L-3.96 234.47M10.10 226.36L24.16 234.47M38.22 210.12L24.16 234.47M38.22 210.12L52.28 234.47M52.28 218.24L38.22 210.12M52.28 218.24L66.34 210.12M52.28 218.24L52.28 234.47M38.22 226.36L38.22 210.12M38.22 226.36L24.16 234.47M38.22 226.36L52.28 234.47M66.34 210.12L52.28 234.47M66.34 210.12L80.40 234.47M80.40 218.24L66.34 210.12M80.40 218.24L94.46 210.12M80.40 218.24L80.40 234.47M66.34 226.36L66.34 210.12M66.34 226.36L52.28 234.47M66.34 226.36L80.40 234.47M94.46 210.12L80.40 234.47M94.46 210.12L108.52 234.47M108.52 218.24L94.46 210.12M108.52 218.24L122.58 210.12M108.52 218.24L108.52 234.47M94.46 226.36L94.46 210.12M94.46 226.36L80.40 234.47M94.46 226.36L108.52 234.47M122.58 210.12L108.52 234.47M122.58 210.12L136.64 234.47M136.64 218.24L122.58 210.12M136.64 218.24L150.70 210.12M136.64 218.24L136.64 234.47M122.58 226.36L122.58 210.12M122.58 226.36L108.52 234.47M122.58 226.36L136.64 234.47M150.70 210.12L136.64 234.47M150.70 210.12L164.76 234.47M164.76 218.24L150.70 210.12M164.76 218.24L178.82 210.12M164.76 218.24L164.76 234.47M150.70 226.36L150.70 210.12M150.70 226.36L136.64 234.47M150.70 226.36L164.76 234.47M178.82 210.12L164.76 234.47M178.82 210.12L192.88 234.47M192.88 218.24L178.82 210.12M192.88 218.24L206.94 210.12M192.88 218.24L192.88 234.47M178.82 226.36L178.82 210.12M178.82 226.36L164.76 234.47M178.82 226.36L192.88 234.47M206.94 210.12L192.88 234.47M206.94 210.12L221.00 234.47M221.00 218.24L206.94 210.12M221.00 218.24L235.06 210.12M221.00 218.24L221.00 234.47M206.94 226.36L206.94 210.12M206.94 226.36L192.88 234.47M206.94 226.36L221.00 234.47M235.06 210.12L221.00 234.47M235.06 210.12L249.12 234.47M249.12 218.24L235.06 210.12M249.12 218.24L263.18 210.12M249.12 218.24L249.12 234.47M235.06 226.36L235.06 210.12M235.06 226.36L221.00 234.47M235.06 226.36L249.12 234.47M263.18 210.12L249.12 234.47M263.18 210.12L277.24 234.47M277.24 218.24L263.18 210.12M277.24 218.24L291.30 210.12M277.24 218.24L277.24 234.47M263.18 226.36L263.18 210.12M263.18 226.36L249.12 234.47M263.18 226.36L277.24 234.47M-5.00 234.47L192.90 234.47M-60.20 234.47L-74.26 258.83M-60.20 234.47L-46.14 258.83M-46.14 242.59L-60.20 234.47M-46.14 242.59L-32.08 234.47M-46.14 242.59L-46.14 258.83M-60.20 250.71L-60.20 234.47M-60.20 250.71L-74.26 258.83M-60.20 250.71L-46.14 258.83M-32.08 234.47L-46.14 258.83M-32.08 234.47L-18.02 258.83M-18.02 242.59L-32.08 234.47M-18.02 242.59L-3.96 234.47M-18.02 242.59L-18.02 258.83M-32.08 250.71L-32.08 234.47M-32.08 250.71L-46.14 258.83M-32.08 250.71L-18.02 258.83M-3.96 234.47L-18.02 258.83M-3.96 234.47L10.10 258.83M10.10 242.59L-3.96 234.47M10.10 242.59L24.16 234.47M10.10 242.59L10.10 258.83M-3.96 250.71L-3.96 234.47M-3.96 250.71L-18.02 258.83M-3.96 250.71L10.10 258.83M24.16 234.47L10.10 258.83M24.16 234.47L38.22 258.83M38.22 242.59L24.16 234.47M38.22 242.59L52.28 234.47M38.22 242.59L38.22 258.83M24.16 250.71L24.16 234.47M24.16 250.71L10.10 258.83M24.16 250.71L38.22 258.83M52.28 234.47L38.22 258.83M52.28 234.47L66.34 258.83M66.34 242.59L52.28 234.47M66.34 242.59L80.40 234.47M66.34 242.59L66.34 258.83M52.28 250.71L52.28 234.47M52.28 250.71L38.22 258.83M52.28 250.71L66.34 258.83M80.40 234.47L66.34 258.83M80.40 234.47L94.46 258.83M94.46 242.59L80.40 234.47M94.46 242.59L108.52 234.47M94.46 242.59L94.46 258.83M80.40 250.71L80.40 234.47M80.40 250.71L66.34 258.83M80.40 250.71L94.46 258.83M108.52 234.47L94.46 258.83M108.52 234.47L122.58 258.83M122.58 242.59L108.52 234.47M122.58 242.59L136.64 234.47M122.58 242.59L122.58 258.83M108.52 250.71L108.52 234.47M108.52 250.71L94.46 258.83M108.52 250.71L122.58 258.83M136.64 234.47L122.58 258.83M136.64 234.47L150.70 258.83M150.70 242.59L136.64 234.47M150.70 242.59L164.76 234.47M150.70 242.59L150.70 258.83M136.64 250.71L136.64 234.47M136.64 250.71L122.58 258.83M136.64 250.71L150.70 258.83M164.76 234.47L150.70 258.83M164.76 234.47L178.82 258.83M178.82 242.59L164.76 234.47M178.82 242.59L192.88 234.47M178.82 242.59L178.82 258.83M164.76 250.71L164.76 234.47M164.76 250.71L150.70 258.83M164.76 250.71L178.82 258.83M192.88 234.47L178.82 258.83M192.88 234.47L206.94 258.83M206.94 242.59L192.88 234.47M206.94 242.59L221.00 234.47M206.94 242.59L206.94 258.83M192.88 250.71L192.88 234.47M192.88 250.71L178.82 258.83M192.88 250.71L206.94 258.83M221.00 234.47L206.94 258.83M221.00 234.47L235.06 258.83M235.06 242.59L221.00 234.47M235.06 242.59L249.12 234.47M235.06 242.59L235.06 258.83M221.00 250.71L221.00 234.47M221.00 250.71L206.94 258.83M221.00 250.71L235.06 258.83M249.12 234.47L235.06 258.83M249.12 234.47L263.18 258.83M263.18 242.59L249.12 234.47M263.18 242.59L277.24 234.47M263.18 242.59L263.18 258.83M249.12 250.71L249.12 234.47M249.12 250.71L235.06 258.83M249.12 250.71L263.18 258.83M277.24 234.47L263.18 258.83M277.24 234.47L291.30 258.83M291.30 242.59L277.24 234.47M291.30 242.59L305.36 234.47M291.30 242.59L291.30 258.83M277.24 250.71L277.24 234.47M277.24 250.71L263.18 258.83M277.24 250.71L291.30 258.83" stroke="#72bcd8" stroke-width="0.75" fill="none"/><g fill="#5aaed0"><circle cx="-60.20" cy="-57.76" r="0.9"/><circle cx="-32.08" cy="-57.76" r="0.9"/><circle cx="-3.96" cy="-57.76" r="0.9"/><circle cx="24.16" cy="-57.76" r="0.9"/><circle cx="52.28" cy="-57.76" r="0.9"/><circle cx="80.40" cy="-57.76" r="0.9"/><circle cx="108.52" cy="-57.76" r="0.9"/><circle cx="136.64" cy="-57.76" r="0.9"/><circle cx="164.76" cy="-57.76" r="0.9"/><circle cx="192.88" cy="-57.76" r="0.9"/><circle cx="221.00" cy="-57.76" r="0.9"/><circle cx="249.12" cy="-57.76" r="0.9"/><circle cx="277.24" cy="-57.76" r="0.9"/><circle cx="-74.26" cy="-33.41" r="0.9"/><circle cx="-46.14" cy="-33.41" r="0.9"/><circle cx="-18.02" cy="-33.41" r="0.9"/><circle cx="10.10" cy="-33.41" r="0.9"/><circle cx="38.22" cy="-33.41" r="0.9"/><circle cx="66.34" cy="-33.41" r="0.9"/><circle cx="94.46" cy="-33.41" r="0.9"/><circle cx="122.58" cy="-33.41" r="0.9"/><circle cx="150.70" cy="-33.41" r="0.9"/><circle cx="178.82" cy="-33.41" r="0.9"/><circle cx="206.94" cy="-33.41" r="0.9"/><circle cx="235.06" cy="-33.41" r="0.9"/><circle cx="263.18" cy="-33.41" r="0.9"/><circle cx="-60.20" cy="-9.05" r="0.9"/><circle cx="-32.08" cy="-9.05" r="0.9"/><circle cx="-3.96" cy="-9.05" r="0.9"/><circle cx="24.16" cy="-9.05" r="0.9"/><circle cx="52.28" cy="-9.05" r="0.9"/><circle cx="80.40" cy="-9.05" r="0.9"/><circle cx="108.52" cy="-9.05" r="0.9"/><circle cx="136.64" cy="-9.05" r="0.9"/><circle cx="164.76" cy="-9.05" r="0.9"/><circle cx="192.88" cy="-9.05" r="0.9"/><circle cx="221.00" cy="-9.05" r="0.9"/><circle cx="249.12" cy="-9.05" r="0.9"/><circle cx="277.24" cy="-9.05" r="0.9"/><circle cx="-74.26" cy="15.30" r="0.9"/><circle cx="-46.14" cy="15.30" r="0.9"/><circle cx="-18.02" cy="15.30" r="0.9"/><circle cx="10.10" cy="15.30" r="0.9"/><circle cx="38.22" cy="15.30" r="0.9"/><circle cx="66.34" cy="15.30" r="0.9"/><circle cx="94.46" cy="15.30" r="0.9"/><circle cx="122.58" cy="15.30" r="0.9"/><circle cx="150.70" cy="15.30" r="0.9"/><circle cx="178.82" cy="15.30" r="0.9"/><circle cx="206.94" cy="15.30" r="0.9"/><circle cx="235.06" cy="15.30" r="0.9"/><circle cx="263.18" cy="15.30" r="0.9"/><circle cx="-60.20" cy="39.65" r="0.9"/><circle cx="-32.08" cy="39.65" r="0.9"/><circle cx="-3.96" cy="39.65" r="0.9"/><circle cx="24.16" cy="39.65" r="0.9"/><circle cx="52.28" cy="39.65" r="0.9"/><circle cx="80.40" cy="39.65" r="0.9"/><circle cx="108.52" cy="39.65" r="0.9"/><circle cx="136.64" cy="39.65" r="0.9"/><circle cx="164.76" cy="39.65" r="0.9"/><circle cx="192.88" cy="39.65" r="0.9"/><circle cx="221.00" cy="39.65" r="0.9"/><circle cx="249.12" cy="39.65" r="0.9"/><circle cx="277.24" cy="39.65" r="0.9"/><circle cx="-74.26" cy="64.01" r="0.9"/><circle cx="-46.14" cy="64.01" r="0.9"/><circle cx="-18.02" cy="64.01" r="0.9"/><circle cx="10.10" cy="64.01" r="0.9"/><circle cx="38.22" cy="64.01" r="0.9"/><circle cx="66.34" cy="64.01" r="0.9"/><circle cx="94.46" cy="64.01" r="0.9"/><circle cx="122.58" cy="64.01" r="0.9"/><circle cx="150.70" cy="64.01" r="0.9"/><circle cx="178.82" cy="64.01" r="0.9"/><circle cx="206.94" cy="64.01" r="0.9"/><circle cx="235.06" cy="64.01" r="0.9"/><circle cx="263.18" cy="64.01" r="0.9"/><circle cx="-60.20" cy="88.36" r="0.9"/><circle cx="-32.08" cy="88.36" r="0.9"/><circle cx="-3.96" cy="88.36" r="0.9"/><circle cx="24.16" cy="88.36" r="0.9"/><circle cx="52.28" cy="88.36" r="0.9"/><circle cx="80.40" cy="88.36" r="0.9"/><circle cx="108.52" cy="88.36" r="0.9"/><circle cx="136.64" cy="88.36" r="0.9"/><circle cx="164.76" cy="88.36" r="0.9"/><circle cx="192.88" cy="88.36" r="0.9"/><circle cx="221.00" cy="88.36" r="0.9"/><circle cx="249.12" cy="88.36" r="0.9"/><circle cx="277.24" cy="88.36" r="0.9"/><circle cx="-74.26" cy="112.71" r="0.9"/><circle cx="-46.14" cy="112.71" r="0.9"/><circle cx="-18.02" cy="112.71" r="0.9"/><circle cx="10.10" cy="112.71" r="0.9"/><circle cx="38.22" cy="112.71" r="0.9"/><circle cx="66.34" cy="112.71" r="0.9"/><circle cx="94.46" cy="112.71" r="0.9"/><circle cx="122.58" cy="112.71" r="0.9"/><circle cx="150.70" cy="112.71" r="0.9"/><circle cx="178.82" cy="112.71" r="0.9"/><circle cx="206.94" cy="112.71" r="0.9"/><circle cx="235.06" cy="112.71" r="0.9"/><circle cx="263.18" cy="112.71" r="0.9"/><circle cx="-60.20" cy="137.06" r="0.9"/><circle cx="-32.08" cy="137.06" r="0.9"/><circle cx="-3.96" cy="137.06" r="0.9"/><circle cx="24.16" cy="137.06" r="0.9"/><circle cx="52.28" cy="137.06" r="0.9"/><circle cx="80.40" cy="137.06" r="0.9"/><circle cx="108.52" cy="137.06" r="0.9"/><circle cx="136.64" cy="137.06" r="0.9"/><circle cx="164.76" cy="137.06" r="0.9"/><circle cx="192.88" cy="137.06" r="0.9"/><circle cx="221.00" cy="137.06" r="0.9"/><circle cx="249.12" cy="137.06" r="0.9"/><circle cx="277.24" cy="137.06" r="0.9"/><circle cx="-74.26" cy="161.42" r="0.9"/><circle cx="-46.14" cy="161.42" r="0.9"/><circle cx="-18.02" cy="161.42" r="0.9"/><circle cx="10.10" cy="161.42" r="0.9"/><circle cx="38.22" cy="161.42" r="0.9"/><circle cx="66.34" cy="161.42" r="0.9"/><circle cx="94.46" cy="161.42" r="0.9"/><circle cx="122.58" cy="161.42" r="0.9"/><circle cx="150.70" cy="161.42" r="0.9"/><circle cx="178.82" cy="161.42" r="0.9"/><circle cx="206.94" cy="161.42" r="0.9"/><circle cx="235.06" cy="161.42" r="0.9"/><circle cx="263.18" cy="161.42" r="0.9"/><circle cx="-60.20" cy="185.77" r="0.9"/><circle cx="-32.08" cy="185.77" r="0.9"/><circle cx="-3.96" cy="185.77" r="0.9"/><circle cx="24.16" cy="185.77" r="0.9"/><circle cx="52.28" cy="185.77" r="0.9"/><circle cx="80.40" cy="185.77" r="0.9"/><circle cx="108.52" cy="185.77" r="0.9"/><circle cx="136.64" cy="185.77" r="0.9"/><circle cx="164.76" cy="185.77" r="0.9"/><circle cx="192.88" cy="185.77" r="0.9"/><circle cx="221.00" cy="185.77" r="0.9"/><circle cx="249.12" cy="185.77" r="0.9"/><circle cx="277.24" cy="185.77" r="0.9"/><circle cx="-74.26" cy="210.12" r="0.9"/><circle cx="-46.14" cy="210.12" r="0.9"/><circle cx="-18.02" cy="210.12" r="0.9"/><circle cx="10.10" cy="210.12" r="0.9"/><circle cx="38.22" cy="210.12" r="0.9"/><circle cx="66.34" cy="210.12" r="0.9"/><circle cx="94.46" cy="210.12" r="0.9"/><circle cx="122.58" cy="210.12" r="0.9"/><circle cx="150.70" cy="210.12" r="0.9"/><circle cx="178.82" cy="210.12" r="0.9"/><circle cx="206.94" cy="210.12" r="0.9"/><circle cx="235.06" cy="210.12" r="0.9"/><circle cx="263.18" cy="210.12" r="0.9"/><circle cx="-60.20" cy="234.47" r="0.9"/><circle cx="-32.08" cy="234.47" r="0.9"/><circle cx="-3.96" cy="234.47" r="0.9"/><circle cx="24.16" cy="234.47" r="0.9"/><circle cx="52.28" cy="234.47" r="0.9"/><circle cx="80.40" cy="234.47" r="0.9"/><circle cx="108.52" cy="234.47" r="0.9"/><circle cx="136.64" cy="234.47" r="0.9"/><circle cx="164.76" cy="234.47" r="0.9"/><circle cx="192.88" cy="234.47" r="0.9"/><circle cx="221.00" cy="234.47" r="0.9"/><circle cx="249.12" cy="234.47" r="0.9"/><circle cx="277.24" cy="234.47" r="0.9"/></g></svg><div class="t" style="left:49.8px;top:198.3px;font-size:17.6px;color:#000;-webkit-text-stroke:0.3px #000;letter-spacing:-0.25px">Shop Name</div>
<svg width="44.40" height="44.40" style="position:absolute;left:18.50px;top:234.90px" viewBox="0 0 29 29" shape-rendering="auto"><path d="M0 0h7v1h-7zM8 0h5v1h-5zM14 0h2v1h-2zM19 0h1v1h-1zM22 0h7v1h-7zM0 1h1v1h-1zM6 1h1v1h-1zM8 1h2v1h-2zM11 1h2v1h-2zM15 1h1v1h-1zM20 1h1v1h-1zM22 1h1v1h-1zM28 1h1v1h-1zM0 2h1v1h-1zM2 2h3v1h-3zM6 2h1v1h-1zM10 2h1v1h-1zM12 2h1v1h-1zM17 2h2v1h-2zM20 2h1v1h-1zM22 2h1v1h-1zM24 2h3v1h-3zM28 2h1v1h-1zM0 3h1v1h-1zM2 3h3v1h-3zM6 3h1v1h-1zM8 3h2v1h-2zM12 3h5v1h-5zM18 3h3v1h-3zM22 3h1v1h-1zM24 3h3v1h-3zM28 3h1v1h-1zM0 4h1v1h-1zM2 4h3v1h-3zM6 4h1v1h-1zM8 4h11v1h-11zM22 4h1v1h-1zM24 4h3v1h-3zM28 4h1v1h-1zM0 5h1v1h-1zM6 5h1v1h-1zM10 5h1v1h-1zM12 5h1v1h-1zM17 5h3v1h-3zM22 5h1v1h-1zM28 5h1v1h-1zM0 6h7v1h-7zM8 6h1v1h-1zM11 6h1v1h-1zM15 6h5v1h-5zM22 6h7v1h-7zM8 7h2v1h-2zM12 7h3v1h-3zM17 7h1v1h-1zM0 8h1v1h-1zM3 8h4v1h-4zM8 8h3v1h-3zM12 8h2v1h-2zM16 8h1v1h-1zM21 8h4v1h-4zM26 8h2v1h-2zM1 9h1v1h-1zM5 9h1v1h-1zM7 9h2v1h-2zM14 9h1v1h-1zM19 9h1v1h-1zM21 9h1v1h-1zM26 9h1v1h-1zM1 10h6v1h-6zM10 10h1v1h-1zM13 10h1v1h-1zM16 10h1v1h-1zM18 10h2v1h-2zM22 10h2v1h-2zM25 10h3v1h-3zM0 11h1v1h-1zM2 11h3v1h-3zM7 11h1v1h-1zM11 11h3v1h-3zM15 11h3v1h-3zM20 11h2v1h-2zM25 11h2v1h-2zM28 11h1v1h-1zM0 12h1v1h-1zM4 12h1v1h-1zM6 12h1v1h-1zM8 12h2v1h-2zM12 12h2v1h-2zM15 12h7v1h-7zM23 12h1v1h-1zM25 12h4v1h-4zM0 13h1v1h-1zM3 13h2v1h-2zM6 13h1v1h-1zM8 13h2v1h-2zM11 13h1v1h-1zM15 13h1v1h-1zM19 13h5v1h-5zM25 13h3v1h-3zM2 14h7v1h-7zM12 14h1v1h-1zM14 14h5v1h-5zM20 14h1v1h-1zM22 14h7v1h-7zM0 15h1v1h-1zM7 15h2v1h-2zM10 15h1v1h-1zM13 15h1v1h-1zM19 15h1v1h-1zM0 16h5v1h-5zM10 16h2v1h-2zM17 16h1v1h-1zM19 16h3v1h-3zM23 16h1v1h-1zM26 16h3v1h-3zM4 17h3v1h-3zM8 17h1v1h-1zM10 17h3v1h-3zM16 17h1v1h-1zM18 17h3v1h-3zM22 17h1v1h-1zM25 17h2v1h-2zM0 18h3v1h-3zM4 18h1v1h-1zM6 18h1v1h-1zM9 18h1v1h-1zM14 18h1v1h-1zM16 18h9v1h-9zM26 18h1v1h-1zM0 19h1v1h-1zM4 19h3v1h-3zM9 19h5v1h-5zM15 19h1v1h-1zM17 19h2v1h-2zM20 19h2v1h-2zM1 20h1v1h-1zM3 20h1v1h-1zM6 20h2v1h-2zM9 20h4v1h-4zM15 20h1v1h-1zM17 20h1v1h-1zM19 20h7v1h-7zM28 20h1v1h-1zM10 21h2v1h-2zM13 21h4v1h-4zM18 21h1v1h-1zM20 21h1v1h-1zM24 21h3v1h-3zM0 22h7v1h-7zM8 22h1v1h-1zM13 22h3v1h-3zM20 22h1v1h-1zM22 22h1v1h-1zM24 22h1v1h-1zM26 22h1v1h-1zM0 23h1v1h-1zM6 23h1v1h-1zM9 23h2v1h-2zM12 23h3v1h-3zM18 23h3v1h-3zM24 23h2v1h-2zM27 23h2v1h-2zM0 24h1v1h-1zM2 24h3v1h-3zM6 24h1v1h-1zM11 24h1v1h-1zM13 24h1v1h-1zM15 24h2v1h-2zM18 24h1v1h-1zM20 24h5v1h-5zM26 24h3v1h-3zM0 25h1v1h-1zM2 25h3v1h-3zM6 25h1v1h-1zM10 25h2v1h-2zM14 25h1v1h-1zM16 25h7v1h-7zM24 25h1v1h-1zM26 25h2v1h-2zM0 26h1v1h-1zM2 26h3v1h-3zM6 26h1v1h-1zM9 26h2v1h-2zM13 26h3v1h-3zM17 26h1v1h-1zM20 26h2v1h-2zM24 26h1v1h-1zM26 26h3v1h-3zM0 27h1v1h-1zM6 27h1v1h-1zM9 27h4v1h-4zM14 27h1v1h-1zM20 27h3v1h-3zM24 27h2v1h-2zM27 27h2v1h-2zM0 28h7v1h-7zM8 28h2v1h-2zM11 28h3v1h-3zM19 28h1v1h-1zM21 28h1v1h-1zM23 28h1v1h-1zM25 28h4v1h-4z" fill="#000"/></svg>
<div class="t" style="left:71.1px;top:240px;font-size:6.5px;color:#666;line-height:8.1px">By accessing the QRcode,<br>you agree to the access analysis.</div>
<div class="t" style="left:70.4px;top:265.2px;font-size:6.9px;color:#55b2e3;letter-spacing:-0.35px"><span style="color:#1e3f86;font-size:9px;font-weight:bold;font-style:italic">W</span><span style="color:#2b6cb8;font-weight:bold">orld</span>Shopping</div>
<div class="t" style="left:116.5px;top:268.9px;font-size:5.5px;color:#555;letter-spacing:0.05px">Purchasing Supporter</div>
</div><svg class="a" style="left:0;top:0" width="670" height="405" viewBox="0 0 670 405">
<rect x="312.8" y="82.3" width="188.8" height="179.2" fill="none" stroke="#3d6fcf" stroke-width="0.9"/>
<rect x="314.2" y="83.8" width="185.8" height="176.3" fill="none" stroke="#4f5b68" stroke-width="1.8"/>
<path d="M407.5 72.5V81.5" stroke="#4c8bf5" stroke-width="0.9"/>
<g fill="none" stroke="#fff" stroke-width="3" opacity="0.6">
<path d="M402.3 260.3H412.2M403 84.3H411.6M314.5 167.8V176.3"/>
</g>
<g fill="none" stroke="#000" stroke-width="1.75">
<path d="M314.5 91.8V84.7H322"/>
<path d="M492.5 84.7H500V91.8"/>
<path d="M314.5 252.7V260.2H322"/>
<path d="M492.5 260.2H500V252.7"/>
<path d="M402.8 260.2H411.8M403.2 84.4H411.6M314.5 167.8V176.3M500 167.8V176.3"/>
</g>
<g fill="#1a73e8">
<rect x="311.2" y="81.2" width="3.6" height="3.4"/>
<rect x="500" y="81.2" width="3.4" height="3.4"/>
<rect x="311.2" y="259.8" width="3.4" height="3.4"/>
<rect x="500" y="259.8" width="3.4" height="3.4"/>
<rect x="405.6" y="81.1" width="3.6" height="1.8"/>
<rect x="405.4" y="261.8" width="3.8" height="1.6"/>
<rect x="311.4" y="169.8" width="1.7" height="4.4"/>
<rect x="501.5" y="169.8" width="1.7" height="4.4"/>
</g>
</svg>

<div class="a" style="left:388px;top:392.8px;width:27.8px;height:1.3px;background:#747775"></div>

<svg class="a" style="left:0;top:0" width="670" height="405" viewBox="0 0 670 405"><g fill="none" stroke="#5f6368" stroke-width="0.95"><rect x="17.6" y="380.5" width="3.1" height="3.1" rx=".25"/><rect x="21.9" y="380.5" width="3.1" height="3.1" rx=".25"/><rect x="17.6" y="384.8" width="3.1" height="3.1" rx=".25"/><rect x="21.9" y="384.8" width="3.1" height="3.1" rx=".25"/></g></svg>
<svg class="ic" style="left:42.5px;top:378.5px" width="12" height="12" viewBox="0 0 24 24"><path d="M15.41 7.41L14 6l-6 6 6 6 1.41-1.41L10.83 12z"/></svg>

<div class="a" style="left:423.6px;top:55.5px;width:149.4px;height:125.1px;background:#fff;border-radius:3px;box-shadow:0 1px 2px rgba(60,64,67,.3),0 1px 4px 1px rgba(60,64,67,.15)"></div>
<div class="a" style="left:423.6px;top:99px;width:149.4px;height:1px;background:#e3e3e3"></div>
<div class="a" style="left:422.4px;top:56.8px;width:147.2px;height:14.9px;border:2px solid #d9254a;border-radius:3px"></div>
<svg class="a" style="left:0;top:0" width="670" height="405" viewBox="0 0 670 405">
<g fill="#444746">
<path transform="translate(430.46 61.56) scale(0.46)" d="M18 15v3H6v-3H4v3c0 1.1.9 2 2 2h12c1.1 0 2-.9 2-2v-3h-2zM7 9l1.41 1.41L11 7.83V16h2V7.83l2.59 2.58L17 9l-5-5-5 5z"/>
<path transform="translate(430.98 80.18) scale(0.44)" d="M15.5 14h-.79l-.28-.27C15.41 12.59 16 11.11 16 9.5 16 5.91 13.09 3 9.5 3S3 5.91 3 9.5 5.91 16 9.5 16c1.61 0 3.09-.59 4.23-1.57l.27.28v.79l5 4.99L20.49 19l-4.99-5zm-6 0C7.01 14 5 11.99 5 9.5S7.01 5 9.5 5 14 7.01 14 9.5 11.99 14 9.5 14z"/>
<path transform="translate(430.68 143.58) scale(0.46)" d="M3.9 12c0-1.71 1.39-3.1 3.1-3.1h4V7H7c-2.76 0-5 2.24-5 5s2.24 5 5 5h4v-1.9H7c-1.71 0-3.1-1.39-3.1-3.1zM8 13h8v-2H8v2zm9-6h-4v1.9h4c1.71 0 3.1 1.39 3.1 3.1s-1.39 3.1-3.1 3.1h-4V17h4c2.76 0 5-2.24 5-5s-2.24-5-5-5z"/>
<path d="M432.6 165.4H434.4L435.3 164.3H437.3L438.2 165.4H439.8A.7 .7 0 0 1 440.5 166.1V170.8A.7 .7 0 0 1 439.8 171.5H432.6A.7 .7 0 0 1 431.9 170.8V166.1A.7 .7 0 0 1 432.6 165.4Z" fill="none" stroke="#444746" stroke-width="1"/><circle cx="436.2" cy="168.4" r="1.5"/>
<path transform="translate(430.6 126.7) scale(0.42)" d="M2 12A5 5 0 0 1 12 12ZM12 2A5 5 0 0 1 12 12ZM22 12A5 5 0 0 1 12 12ZM12 22A5 5 0 0 1 12 12Z"/>
</g>
<path d="M435.2 109.6Q436 108.4 436.8 109.6L440 115.2Q440.6 116.5 439.2 116.5H432.8Q431.4 116.5 432 115.2Z" fill="none" stroke="#444746" stroke-width="1.05" stroke-linejoin="round"/>
<path d="M436 112.3L437.7 115.2H434.3Z" fill="#444746"/>
</svg>
<div class="t" style="left:445.9px;top:63.2px;font-size:8.2px;color:#3c3c3c">パソコンからアップロード</div>
<div class="t" style="left:446px;top:82px;font-size:8.2px;color:#3c3c3c">ウェブを検索</div>
<div class="t" style="left:446.2px;top:109.8px;font-size:8.2px;color:#3c3c3c">ドライブ</div>
<div class="t" style="left:446.2px;top:128px;font-size:8.2px;color:#3c3c3c">フォト</div>
<div class="t" style="left:446.2px;top:145.2px;font-size:9.4px;color:#3c3c3c;letter-spacing:-0.6px;display:inline-block;transform:scaleX(0.86);transform-origin:0 0">URL</div>
<div class="t" style="left:446px;top:163.5px;font-size:8.2px;color:#3c3c3c">カメラ</div>

</body></html>
